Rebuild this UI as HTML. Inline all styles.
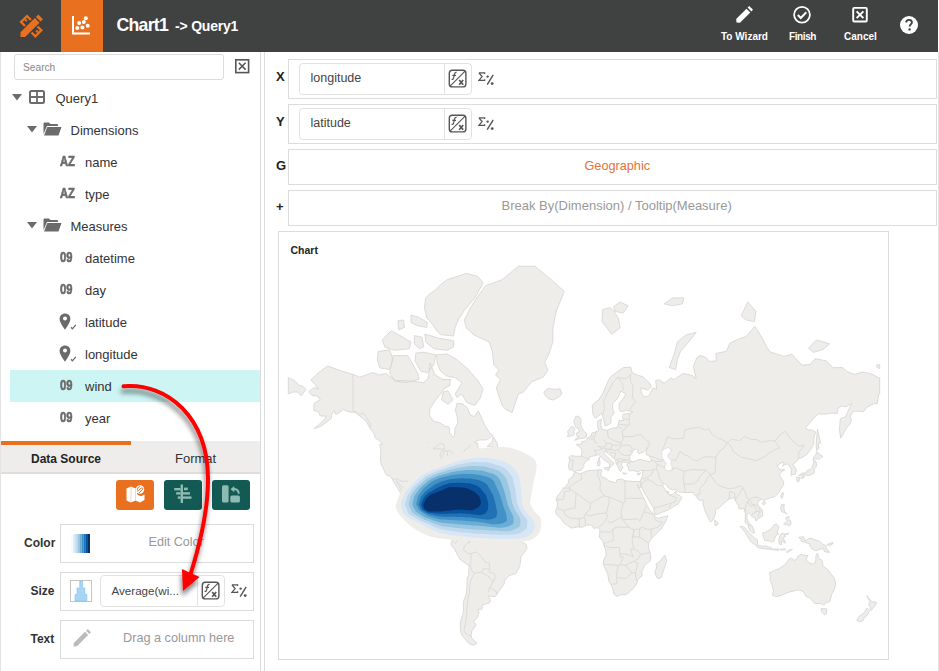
<!DOCTYPE html>
<html><head><meta charset="utf-8"><style>
html,body{margin:0;padding:0;}
body{width:939px;height:671px;overflow:hidden;position:relative;background:#fff;font-family:"Liberation Sans", sans-serif;}
.t{position:absolute;white-space:nowrap;}
svg{display:block}
*{box-sizing:border-box}
</style></head><body>
<div style="position:absolute;left:0px;top:0px;width:938px;height:52px;background:#404141"></div><div style="position:absolute;left:61px;top:0px;width:42px;height:52px;background:#e8701e"></div><svg style="position:absolute;left:0;top:0" width="60" height="52" viewBox="0 0 60 52">
<g fill="#e8701e" transform="translate(31.3,26.2) rotate(-45)">
<path d="M-12 -3.3 H8.3 V3.3 H-12 L-15.3 0 Z"/>
<rect x="9.8" y="-3.3" width="3.4" height="6.6"/>
<path d="M-5.4 -4.6 V-11.4 H5.3 V-4.6 H3 V-9.1 H-3.1 V-4.6 Z"/>
<rect x="-0.6" y="-9.1" width="2" height="2.4"/>
<path d="M-5.4 4.6 V11.2 H5.3 V4.6 H3 V8.9 H-3.1 V4.6 Z"/>
<rect x="-0.6" y="6.5" width="2" height="2.4"/>
</g></svg><svg style="position:absolute;left:70px;top:14px" width="22" height="22" viewBox="0 0 22 22">
<path d="M3 2 V19.5 H20" stroke="#fff" stroke-width="2" fill="none"/>
<g fill="#fff"><circle cx="9.2" cy="9.1" r="2"/><circle cx="15.8" cy="4.3" r="2"/><circle cx="13.8" cy="8" r="2"/><circle cx="17.7" cy="11.8" r="2"/><circle cx="7.3" cy="13.9" r="2"/><circle cx="12.4" cy="13.4" r="2"/></g></svg><div class="t" style="left:116.5px;top:17.42px;font-size:17.7px;line-height:17.7px;font-weight:700;color:#fff;letter-spacing:-0.75px">Chart1</div><div class="t" style="left:175px;top:19.15px;font-size:14px;line-height:14px;font-weight:700;color:#fff;letter-spacing:-0.2px">-&gt; Query1</div><svg style="position:absolute;left:734px;top:5px" width="20" height="20" viewBox="0 0 20 20">
<path d="M2.5 17.5 L2.2 14 L12.5 3.7 L16.3 7.5 L6 17.8 Z" fill="#fff"/><path d="M13.6 2.6 L15.2 1 L19 4.8 L17.4 6.4 Z" fill="#fff"/></svg><div class="t" style="left:721px;top:31.54px;font-size:10px;line-height:10px;font-weight:700;color:#fff;">To Wizard</div><svg style="position:absolute;left:792px;top:5px" width="20" height="20" viewBox="0 0 20 20">
<circle cx="10" cy="9.8" r="7.9" stroke="#fff" stroke-width="1.8" fill="none"/><path d="M5.8 10 L8.8 13 L14.3 7.3" stroke="#fff" stroke-width="2" fill="none"/></svg><div class="t" style="left:789px;top:31.54px;font-size:10px;line-height:10px;font-weight:700;color:#fff;letter-spacing:-0.4px">Finish</div><svg style="position:absolute;left:851px;top:6px" width="18" height="18" viewBox="0 0 18 18">
<rect x="2.2" y="1.9" width="13.6" height="13.6" rx="1" stroke="#fff" stroke-width="1.9" fill="none"/><path d="M5.6 5.3 L12.4 12.1 M12.4 5.3 L5.6 12.1" stroke="#fff" stroke-width="1.9"/></svg><div class="t" style="left:844px;top:31.54px;font-size:10px;line-height:10px;font-weight:700;color:#fff;">Cancel</div><svg style="position:absolute;left:899px;top:15px" width="20" height="20" viewBox="0 0 20 20">
<circle cx="10" cy="10" r="9" fill="#fff"/><path d="M7.2 7.6 C7.2 5.8 8.4 4.9 10 4.9 C11.7 4.9 12.9 5.9 12.9 7.4 C12.9 9.2 10.6 9.6 10.6 11.6" stroke="#404141" stroke-width="1.9" fill="none"/><circle cx="10.6" cy="14.4" r="1.2" fill="#404141"/></svg><div style="position:absolute;left:0px;top:52px;width:1px;height:619px;background:#e3e3e3"></div><div style="position:absolute;left:938px;top:52px;width:1px;height:619px;background:#e3e3e3"></div><div style="position:absolute;left:260px;top:52px;width:1px;height:619px;background:#dcdcdc"></div><div style="position:absolute;left:264px;top:52px;width:1px;height:619px;background:#dcdcdc"></div><div style="position:absolute;left:14px;top:54px;width:210px;height:26px;border:1px solid #dcdcdc;border-radius:3px"></div><div class="t" style="left:23px;top:62.57px;font-size:10.2px;line-height:10.2px;font-weight:400;color:#888;">Search</div><svg style="position:absolute;left:235px;top:59px" width="15" height="15" viewBox="0 0 15 15">
<rect x="0.8" y="0.8" width="12.8" height="12.8" stroke="#555" stroke-width="1.6" fill="none"/><path d="M3.8 3.8 L10.6 10.6 M10.6 3.8 L3.8 10.6" stroke="#555" stroke-width="1.5"/></svg><svg style="position:absolute;left:12px;top:94px" width="10" height="7" viewBox="0 0 10 7"><path d="M0 0 H10 L5 6.5 Z" fill="#6b6b6b"/></svg><svg style="position:absolute;left:29px;top:90px" width="16" height="14" viewBox="0 0 16 14">
<rect x="1" y="1" width="14" height="12" rx="1.5" stroke="#6b6b6b" stroke-width="2" fill="none"/><path d="M1 7 H15 M8 1 V13" stroke="#6b6b6b" stroke-width="1.8"/></svg><div class="t" style="left:55.5px;top:92.00px;font-size:13px;line-height:13px;font-weight:400;color:#333;">Query1</div><svg style="position:absolute;left:27px;top:126px" width="10" height="7" viewBox="0 0 10 7"><path d="M0 0 H10 L5 6.5 Z" fill="#6b6b6b"/></svg><svg style="position:absolute;left:43px;top:122px" width="19" height="14" viewBox="0 0 19 14">
<path d="M0.5 1.5 Q0.5 0.5 1.5 0.5 H6 L7.5 2 H14 Q15 2 15 3 V4 H4 L0.5 12 Z" fill="#6b6b6b"/><path d="M4.3 5 H18.5 L15.5 13.5 H1 Z" fill="#6b6b6b"/></svg><div class="t" style="left:70.5px;top:124.00px;font-size:13px;line-height:13px;font-weight:400;color:#333;">Dimensions</div><div class="t" style="left:60px;top:153.75px;font-size:14px;line-height:14px;font-weight:700;color:#6b6b6b;transform:scaleX(0.8);transform-origin:0 0;-webkit-text-stroke:0.6px #6b6b6b">AZ</div><div class="t" style="left:85px;top:155.50px;font-size:13px;line-height:13px;font-weight:400;color:#333;">name</div><div class="t" style="left:60px;top:185.75px;font-size:14px;line-height:14px;font-weight:700;color:#6b6b6b;transform:scaleX(0.8);transform-origin:0 0;-webkit-text-stroke:0.6px #6b6b6b">AZ</div><div class="t" style="left:85px;top:187.50px;font-size:13px;line-height:13px;font-weight:400;color:#333;">type</div><svg style="position:absolute;left:27px;top:222px" width="10" height="7" viewBox="0 0 10 7"><path d="M0 0 H10 L5 6.5 Z" fill="#6b6b6b"/></svg><svg style="position:absolute;left:43px;top:218px" width="19" height="14" viewBox="0 0 19 14">
<path d="M0.5 1.5 Q0.5 0.5 1.5 0.5 H6 L7.5 2 H14 Q15 2 15 3 V4 H4 L0.5 12 Z" fill="#6b6b6b"/><path d="M4.3 5 H18.5 L15.5 13.5 H1 Z" fill="#6b6b6b"/></svg><div class="t" style="left:70.5px;top:220.00px;font-size:13px;line-height:13px;font-weight:400;color:#333;">Measures</div><div style="position:absolute;left:10px;top:370px;width:250px;height:32px;background:#ccf5f4"></div><div class="t" style="left:60px;top:249.75px;font-size:14px;line-height:14px;font-weight:700;color:#6b6b6b;transform:scaleX(0.8);transform-origin:0 0;-webkit-text-stroke:0.6px #6b6b6b">09</div><div class="t" style="left:85px;top:251.50px;font-size:13px;line-height:13px;font-weight:400;color:#333;">datetime</div><div class="t" style="left:60px;top:281.75px;font-size:14px;line-height:14px;font-weight:700;color:#6b6b6b;transform:scaleX(0.8);transform-origin:0 0;-webkit-text-stroke:0.6px #6b6b6b">09</div><div class="t" style="left:85px;top:283.50px;font-size:13px;line-height:13px;font-weight:400;color:#333;">day</div><svg style="position:absolute;left:58.5px;top:312.5px" width="18" height="18" viewBox="0 0 18 18">
<path d="M6 0.5 C2.9 0.5 0.6 2.8 0.6 5.9 C0.6 9.6 6 16.6 6 16.6 C6 16.6 11.4 9.6 11.4 5.9 C11.4 2.8 9.1 0.5 6 0.5 Z M6 3.6 A2 2 0 1 1 6 7.6 A2 2 0 1 1 6 3.6 Z" fill="#6b6b6b" fill-rule="evenodd"/>
<path d="M12 14.2 L13.4 15.8 L16.8 11.8" stroke="#6b6b6b" stroke-width="1.3" fill="none"/></svg><div class="t" style="left:85px;top:315.50px;font-size:13px;line-height:13px;font-weight:400;color:#333;">latitude</div><svg style="position:absolute;left:58.5px;top:344.5px" width="18" height="18" viewBox="0 0 18 18">
<path d="M6 0.5 C2.9 0.5 0.6 2.8 0.6 5.9 C0.6 9.6 6 16.6 6 16.6 C6 16.6 11.4 9.6 11.4 5.9 C11.4 2.8 9.1 0.5 6 0.5 Z M6 3.6 A2 2 0 1 1 6 7.6 A2 2 0 1 1 6 3.6 Z" fill="#6b6b6b" fill-rule="evenodd"/>
<path d="M12 14.2 L13.4 15.8 L16.8 11.8" stroke="#6b6b6b" stroke-width="1.3" fill="none"/></svg><div class="t" style="left:85px;top:347.50px;font-size:13px;line-height:13px;font-weight:400;color:#333;">longitude</div><div class="t" style="left:60px;top:377.75px;font-size:14px;line-height:14px;font-weight:700;color:#6b6b6b;transform:scaleX(0.8);transform-origin:0 0;-webkit-text-stroke:0.6px #6b6b6b">09</div><div class="t" style="left:85px;top:379.50px;font-size:13px;line-height:13px;font-weight:400;color:#333;">wind</div><div class="t" style="left:60px;top:409.75px;font-size:14px;line-height:14px;font-weight:700;color:#6b6b6b;transform:scaleX(0.8);transform-origin:0 0;-webkit-text-stroke:0.6px #6b6b6b">09</div><div class="t" style="left:85px;top:411.50px;font-size:13px;line-height:13px;font-weight:400;color:#333;">year</div><div style="position:absolute;left:1px;top:441px;width:259px;height:31px;background:#eeedeb"></div><div style="position:absolute;left:1px;top:472px;width:259px;height:2px;background:#dedede"></div><div style="position:absolute;left:1px;top:441px;width:130px;height:4px;background:#e8701e"></div><div class="t" style="left:31px;top:452.84px;font-size:12px;line-height:12px;font-weight:700;color:#222;">Data Source</div><div class="t" style="left:175px;top:452.00px;font-size:13px;line-height:13px;font-weight:400;color:#333;">Format</div><div style="position:absolute;left:116px;top:480px;width:38px;height:30px;background:#e8701e;border-radius:3px"></div><div style="position:absolute;left:164px;top:480px;width:38px;height:30px;background:#125a53;border-radius:3px"></div><div style="position:absolute;left:212px;top:480px;width:38px;height:30px;background:#125a53;border-radius:3px"></div><svg style="position:absolute;left:112px;top:476px" width="142" height="38" viewBox="112 476 142 38">
<path d="M126.5 488.5 L131 486.5 L135.5 488.5 L137 487.8 V494 Q139 496.5 141.5 496 L144.5 494.5 V500 L140 502.5 L135.5 500.5 L131 502.5 L126.5 500.5 Z" fill="#fff"/>
<path d="M131 487 V502 M135.5 489 V500.5" stroke="#f5c9a8" stroke-width="0.8"/>
<circle cx="140" cy="489.5" r="4.2" fill="#fff"/>
<path d="M137.6 491.6 L141.2 488 A1 1 0 0 1 142.6 489.4 L139 493" stroke="#e8701e" stroke-width="1" fill="none"/><path d="M137.5 490.5 Q137 487 140 486.3" stroke="#e8701e" stroke-width="0.9" fill="none"/>
<g fill="#8dbab3">
<rect x="180.6" y="484.5" width="2.4" height="18.5"/>
<rect x="174.2" y="488" width="6.4" height="2.4"/><rect x="184" y="487.6" width="3.8" height="2.6"/>
<rect x="176.2" y="492.2" width="4.4" height="2.4"/><rect x="183" y="492.2" width="7" height="2.4"/>
<rect x="177.8" y="496.4" width="2.8" height="2.4"/><rect x="183" y="496.4" width="8.5" height="2.4"/>
<rect x="222" y="485.3" width="6.6" height="17.3" rx="1.5"/><rect x="230.3" y="495.6" width="9.6" height="7" rx="1.5"/>
</g>
<path d="M233 489 Q238.5 488.6 238.8 493.8" stroke="#8dbab3" stroke-width="2" fill="none"/><path d="M230.5 489.2 L234.3 486 L234.3 492.2 Z" fill="#8dbab3"/>
</svg><div class="t" style="left:24px;top:536.84px;font-size:12px;line-height:12px;font-weight:700;color:#333;">Color</div><div style="position:absolute;left:60px;top:524px;width:194px;height:39px;border:1px solid #dcdcdc"></div><svg style="position:absolute;left:71px;top:534px" width="19" height="19"><rect x="0.00" y="0" width="2.16" height="19" fill="#f7fbff"/><rect x="2.11" y="0" width="2.16" height="19" fill="#deebf7"/><rect x="4.22" y="0" width="2.16" height="19" fill="#c6dbef"/><rect x="6.33" y="0" width="2.16" height="19" fill="#9ecae1"/><rect x="8.44" y="0" width="2.16" height="19" fill="#6baed6"/><rect x="10.56" y="0" width="2.16" height="19" fill="#4292c6"/><rect x="12.67" y="0" width="2.16" height="19" fill="#2171b5"/><rect x="14.78" y="0" width="2.16" height="19" fill="#08519c"/><rect x="16.89" y="0" width="2.16" height="19" fill="#08306b"/></svg><div class="t" style="left:148.5px;top:536.33px;font-size:12.6px;line-height:12.6px;font-weight:400;color:#999;">Edit Color</div><div class="t" style="left:30.5px;top:584.84px;font-size:12px;line-height:12px;font-weight:700;color:#333;">Size</div><div style="position:absolute;left:60px;top:572px;width:194px;height:39px;border:1px solid #dcdcdc"></div><svg style="position:absolute;left:70px;top:580px" width="22" height="22" viewBox="0 0 22 22">
<rect x="0.5" y="0.5" width="21" height="21" fill="#fff" stroke="#c4c4c4"/>
<path d="M9.7 1 H12.6 V8 H14.9 V14.3 H16.9 V21 H5 V14.3 H7 V8 H9.7 Z" fill="#a6d6f4" stroke="#86c3ea" stroke-width="0.6"/></svg><div style="position:absolute;left:100px;top:575px;width:125px;height:32px;border:1px solid #e2e2e2;border-radius:4px"></div><div style="position:absolute;left:197px;top:576px;width:1px;height:30px;background:#e2e2e2"></div><div class="t" style="left:111.5px;top:585.18px;font-size:11.6px;line-height:11.6px;font-weight:400;color:#444;">Average(wi...</div><svg style="position:absolute;left:201px;top:581px" width="19" height="19" viewBox="0 0 19 19">
<rect x="1.3" y="1.3" width="16.6" height="16.6" rx="3" stroke="#555" stroke-width="1.4" fill="none"/>
<path d="M1.8 17.4 L17.4 1.8" stroke="#555" stroke-width="1.1"/>
<path d="M8.6 3.4 Q7 3 6.5 4.8 L5.6 9.2 Q5.2 10.8 3.6 10.4 M4.3 6.3 H8" stroke="#555" stroke-width="1.2" fill="none"/>
<path d="M11.2 11 L15.2 15.8 M15.2 11 L11.2 15.8" stroke="#555" stroke-width="1.7"/></svg><svg style="position:absolute;left:231px;top:583.5px" width="17" height="14" viewBox="0 0 17 14">
<path d="M0.9 0.9 H6.6 V2 M0.9 0.9 L4.1 4.6 L0.9 8.4 H6.6 V7.3" stroke="#555" stroke-width="1.3" fill="none"/>
<circle cx="9.6" cy="4.6" r="1.2" fill="#555"/><circle cx="14.2" cy="11.6" r="1.4" fill="#555"/><path d="M15.2 2.8 L9.2 12.6" stroke="#555" stroke-width="1.4"/></svg><div class="t" style="left:30.5px;top:632.84px;font-size:12px;line-height:12px;font-weight:700;color:#333;">Text</div><div style="position:absolute;left:60px;top:620px;width:194px;height:39px;border:1px solid #dcdcdc"></div><svg style="position:absolute;left:72px;top:628px" width="20" height="20" viewBox="0 0 20 20">
<path d="M1.5 18.5 L1.8 15 L13 3.8 L16.2 7 L5 18.2 Z" fill="#bbb"/><path d="M14.1 2.7 L15.8 1 L19 4.2 L17.3 5.9 Z" fill="#bbb"/></svg><div class="t" style="left:123px;top:632.25px;font-size:12.7px;line-height:12.7px;font-weight:400;color:#999;">Drag a column here</div><div style="position:absolute;left:288px;top:59px;width:649px;height:40px;border:1px solid #dcdcdc"></div><div class="t" style="left:276px;top:70.00px;font-size:13px;line-height:13px;font-weight:700;color:#222;">X</div><div style="position:absolute;left:299px;top:63px;width:173px;height:32px;border:1px solid #e2e2e2;border-radius:4px"></div><div style="position:absolute;left:444px;top:64px;width:1px;height:30px;background:#e2e2e2"></div><div class="t" style="left:310.5px;top:72.42px;font-size:12.5px;line-height:12.5px;font-weight:400;color:#444;">longitude</div><svg style="position:absolute;left:447.5px;top:69.2px" width="19" height="19" viewBox="0 0 19 19">
<rect x="1.3" y="1.3" width="16.6" height="16.6" rx="3" stroke="#555" stroke-width="1.4" fill="none"/>
<path d="M1.8 17.4 L17.4 1.8" stroke="#555" stroke-width="1.1"/>
<path d="M8.6 3.4 Q7 3 6.5 4.8 L5.6 9.2 Q5.2 10.8 3.6 10.4 M4.3 6.3 H8" stroke="#555" stroke-width="1.2" fill="none"/>
<path d="M11.2 11 L15.2 15.8 M15.2 11 L11.2 15.8" stroke="#555" stroke-width="1.7"/></svg><svg style="position:absolute;left:477.8px;top:71.8px" width="17" height="14" viewBox="0 0 17 14">
<path d="M0.9 0.9 H6.6 V2 M0.9 0.9 L4.1 4.6 L0.9 8.4 H6.6 V7.3" stroke="#555" stroke-width="1.3" fill="none"/>
<circle cx="9.6" cy="4.6" r="1.2" fill="#555"/><circle cx="14.2" cy="11.6" r="1.4" fill="#555"/><path d="M15.2 2.8 L9.2 12.6" stroke="#555" stroke-width="1.4"/></svg><div style="position:absolute;left:288px;top:104px;width:649px;height:40px;border:1px solid #dcdcdc"></div><div class="t" style="left:276px;top:115.00px;font-size:13px;line-height:13px;font-weight:700;color:#222;">Y</div><div style="position:absolute;left:299px;top:108px;width:173px;height:32px;border:1px solid #e2e2e2;border-radius:4px"></div><div style="position:absolute;left:444px;top:109px;width:1px;height:30px;background:#e2e2e2"></div><div class="t" style="left:310.5px;top:117.42px;font-size:12.5px;line-height:12.5px;font-weight:400;color:#444;">latitude</div><svg style="position:absolute;left:447.5px;top:114.2px" width="19" height="19" viewBox="0 0 19 19">
<rect x="1.3" y="1.3" width="16.6" height="16.6" rx="3" stroke="#555" stroke-width="1.4" fill="none"/>
<path d="M1.8 17.4 L17.4 1.8" stroke="#555" stroke-width="1.1"/>
<path d="M8.6 3.4 Q7 3 6.5 4.8 L5.6 9.2 Q5.2 10.8 3.6 10.4 M4.3 6.3 H8" stroke="#555" stroke-width="1.2" fill="none"/>
<path d="M11.2 11 L15.2 15.8 M15.2 11 L11.2 15.8" stroke="#555" stroke-width="1.7"/></svg><svg style="position:absolute;left:477.8px;top:116.8px" width="17" height="14" viewBox="0 0 17 14">
<path d="M0.9 0.9 H6.6 V2 M0.9 0.9 L4.1 4.6 L0.9 8.4 H6.6 V7.3" stroke="#555" stroke-width="1.3" fill="none"/>
<circle cx="9.6" cy="4.6" r="1.2" fill="#555"/><circle cx="14.2" cy="11.6" r="1.4" fill="#555"/><path d="M15.2 2.8 L9.2 12.6" stroke="#555" stroke-width="1.4"/></svg><div style="position:absolute;left:288px;top:149px;width:649px;height:36px;border:1px solid #dcdcdc"></div><div class="t" style="left:276px;top:159.00px;font-size:13px;line-height:13px;font-weight:700;color:#222;">G</div><div class="t" style="left:584.5px;top:160.25px;font-size:12.7px;line-height:12.7px;font-weight:400;color:#e8703a;">Geographic</div><div style="position:absolute;left:288px;top:190px;width:649px;height:36px;border:1px solid #dcdcdc"></div><div class="t" style="left:276px;top:200.00px;font-size:13px;line-height:13px;font-weight:700;color:#222;">+</div><div class="t" style="left:501.5px;top:199.20px;font-size:13px;line-height:13px;font-weight:400;color:#999;">Break By(Dimension) / Tooltip(Measure)</div><div style="position:absolute;left:278px;top:231px;width:611px;height:429px;border:1px solid #dcdcdc"></div><div class="t" style="left:290.5px;top:245.11px;font-size:10.5px;line-height:10.5px;font-weight:700;color:#222;">Chart</div><svg style="position:absolute;left:0;top:0" width="939" height="671" viewBox="0 0 939 671">
<defs><clipPath id="mapclip"><rect x="279" y="232" width="609" height="427"/></clipPath></defs>
<g clip-path="url(#mapclip)">
<path d="M308.7,391.7L312.1,388.9L315.4,387.6L318.6,389.7L315.9,385.5L310.8,380.1L317.0,374.0L321.9,370.1L327.7,366.1L335.0,368.6L341.6,371.1L353.0,374.4L359.6,377.2L366.1,374.9L372.7,372.5L379.2,374.9L385.8,373.5L395.6,380.4L407.1,380.8L423.5,382.6L428.4,378.1L430.0,363.0L434.9,374.9L443.1,379.5L450.5,379.5L449.7,386.0L444.8,388.0L441.5,392.8L436.6,398.6L430.0,408.5L429.2,415.0L433.3,421.2L439.9,422.7L444.8,426.2L449.2,427.1L449.7,432.6L453.0,437.2L454.6,435.3L454.9,428.5L457.9,422.7L457.1,416.6L455.4,410.2L457.1,403.3L462.8,404.0L467.7,408.1L470.2,415.0L474.3,416.6L478.3,410.8L482.4,419.7L484.9,425.6L490.6,434.0L492.8,435.3L487.4,439.8L479.2,440.0L474.3,442.3L477.5,443.3L478.3,449.2L484.1,450.8L485.7,449.9L479.2,455.0L475.9,456.1L475.1,453.4L472.6,454.1L469.3,455.9L468.5,460.1L466.1,461.2L462.8,462.7L462.8,465.5L460.3,468.2L459.5,470.1L460.3,473.5L457.9,475.1L454.6,477.7L451.3,480.6L450.8,483.8L452.8,489.4L452.3,492.7L450.0,491.3L448.5,487.6L447.6,484.8L445.6,483.8L442.3,483.1L438.2,483.3L437.4,485.5L434.9,485.4L430.0,484.6L425.1,488.0L424.6,491.5L424.0,498.4L427.6,504.0L429.2,505.1L434.1,504.6L436.1,500.2L441.0,499.3L440.7,502.8L439.4,506.3L439.0,508.8L443.1,509.2L447.6,510.5L447.2,514.8L446.9,517.6L450.5,520.6L453.8,519.8L457.1,521.3L457.2,522.4L455.7,523.6L452.5,523.2L450.2,521.9L447.1,521.6L443.6,519.1L440.7,514.1L434.1,512.4L430.0,508.8L425.9,509.4L421.0,507.5L416.1,505.4L411.2,501.4L411.2,497.6L404.6,496.7L403.0,495.8L400.5,493.1L397.3,487.6L395.6,484.8L392.8,480.6L392.0,478.7L389.9,476.1L386.5,475.1L384.3,471.1L383.3,468.4L381.2,464.2L380.4,459.5L380.9,449.9L379.7,444.6L382.5,444.3L379.2,440.5L375.2,438.0L374.3,434.0L370.2,428.5L366.1,421.2L361.2,417.2L355.5,412.5L348.1,411.8L343.2,409.2L338.3,413.4L335.5,414.4L334.2,410.8L331.7,414.4L331.4,418.2L326.8,421.8L321.9,425.6L317.0,427.9L314.1,428.5L318.6,424.8L324.4,419.7L326.0,416.0L320.3,416.0L318.6,412.1L313.7,410.2L314.2,403.3L320.3,399.7L317.0,395.9L312.1,395.6ZM453.0,399.7L448.0,404.3L441.5,399.7L443.1,392.1L448.0,390.9ZM486.9,446.5L492.3,441.8L493.1,436.4L497.2,443.1L497.8,446.8L496.0,448.7L492.3,446.8ZM512.1,412.5L515.2,403.3L518.5,394.0L523.4,392.1L531.6,381.7L543.0,377.2L548.0,370.1L544.7,362.5L548.8,354.2L552.9,341.9L552.9,327.8L556.2,311.4L564.3,291.4L551.2,279.7L534.9,266.2L518.5,266.2L502.1,279.7L485.7,285.7L477.5,296.8L471.0,306.8L464.4,320.0L466.1,327.8L474.3,335.1L489.0,341.9L492.3,351.2L493.9,365.1L498.8,370.1L495.5,374.9L500.5,379.5L496.4,388.0L498.8,395.9L502.1,405.0L505.4,409.2ZM543.9,392.1L548.0,388.4L554.5,389.3L560.2,388.9L561.9,394.0L559.4,396.7L553.4,400.0L548.0,398.6L544.7,394.8ZM592.2,405.0L593.0,415.0L595.5,418.2L598.7,416.0L601.2,413.4L602.3,415.0L603.7,419.7L605.0,425.6L607.4,425.3L611.0,422.7L611.0,416.6L614.3,413.4L612.7,408.5L612.7,403.3L617.6,398.6L620.9,390.9L625.8,394.0L624.1,397.8L619.2,403.3L619.2,409.2L620.9,411.8L626.6,410.5L633.1,411.8L629.9,413.4L623.3,414.1L622.5,416.6L623.6,420.6L619.2,420.3L618.4,424.2L616.3,428.8L614.3,427.6L607.3,430.2L602.0,429.6L600.7,425.3L601.4,419.1L597.9,420.9L597.3,425.6L598.6,429.9L597.4,431.3L595.5,431.8L591.9,433.2L590.6,436.7L588.1,437.7L586.6,440.0L584.0,441.8L581.9,441.3L581.5,444.1L576.3,444.6L579.9,447.2L582.0,450.3L581.5,456.1L577.8,456.3L570.9,455.7L568.8,457.2L569.6,459.9L568.4,466.6L569.4,470.1L571.7,469.7L574.2,471.7L575.3,471.9L576.6,470.7L580.7,470.5L583.2,467.4L584.3,466.3L583.5,464.9L585.5,461.6L589.2,459.5L589.1,457.0L591.9,456.3L596.3,455.4L598.4,454.1L601.2,457.2L604.1,460.1L607.3,462.1L609.7,463.8L609.6,468.0L611.2,466.1L612.2,464.9L614.3,463.6L611.8,461.6L610.2,459.7L606.3,455.9L604.1,453.6L604.3,451.5L606.4,451.1L606.3,452.5L608.6,453.8L611.8,456.6L615.6,459.7L615.9,462.7L617.1,464.9L618.4,467.4L619.4,470.5L620.9,471.3L622.0,468.0L623.3,467.6L621.2,465.3L621.3,462.7L623.3,462.3L626.6,462.1L627.4,463.2L631.5,461.2L629.9,459.5L629.7,456.8L631.2,453.8L632.6,452.2L634.0,449.2L636.4,449.2L638.9,450.3L637.2,451.8L638.9,453.8L642.1,452.5L643.8,452.0L647.9,447.5L646.2,450.8L646.2,454.3L649.2,456.1L652.1,460.3L649.5,461.6L643.0,460.3L641.3,459.5L638.1,459.7L634.8,461.4L631.7,461.4L627.4,463.8L626.8,464.9L628.2,467.0L628.7,470.1L630.7,470.7L634.1,470.5L637.2,471.9L640.5,470.5L643.0,470.5L642.6,473.1L642.8,475.1L641.3,478.1L640.5,481.0L640.0,481.4L641.2,484.8L642.1,488.5L644.6,493.1L647.9,498.4L650.3,502.8L653.6,508.0L654.9,514.4L657.7,514.3L662.6,512.2L669.2,509.4L674.1,506.3L678.2,503.9L682.0,497.6L679.8,495.4L677.4,495.1L676.2,493.3L676.2,490.7L674.9,492.2L672.5,494.5L669.2,494.9L668.4,491.5L667.9,491.1L667.2,493.4L665.9,490.4L663.4,487.2L662.6,483.8L664.3,483.5L666.7,484.8L668.4,487.8L672.5,490.0L676.2,489.3L678.2,491.6L684.9,492.7L692.9,492.4L694.6,494.9L696.7,497.0L697.0,497.9L699.5,500.6L702.8,499.7L703.2,503.7L704.4,508.8L706.0,513.1L708.2,517.3L709.3,520.6L710.9,522.1L712.3,520.6L713.9,518.4L715.4,513.9L715.4,509.7L718.8,508.0L722.4,504.6L726.2,501.1L729.0,499.0L732.2,498.1L734.4,497.7L735.4,500.7L738.5,505.4L738.8,508.8L740.4,509.2L743.9,508.0L745.3,513.1L745.3,518.1L745.0,522.3L748.1,524.7L748.6,527.2L749.9,530.8L753.5,533.3L754.7,532.8L753.4,528.8L751.9,525.6L749.4,524.1L748.1,521.4L746.7,518.1L747.0,513.9L748.6,513.1L750.3,514.4L752.7,517.3L755.2,518.1L756.0,521.1L758.9,518.3L762.9,515.9L762.2,509.7L758.4,505.9L757.3,503.7L758.9,500.7L761.7,499.2L764.5,501.4L765.8,499.3L769.9,498.1L774.8,496.7L778.9,492.5L780.6,489.4L783.7,484.2L783.7,481.9L781.9,479.1L779.4,475.3L781.1,472.1L784.8,469.5L779.7,469.9L778.1,467.0L776.8,465.9L779.7,464.0L783.0,461.9L783.8,463.8L782.5,466.3L784.7,464.7L787.8,463.8L791.4,469.1L791.2,474.1L790.9,475.3L795.3,473.9L796.1,472.1L796.1,469.1L794.5,467.0L792.8,464.2L796.6,461.6L798.1,458.8L801.9,457.7L805.9,455.2L810.9,449.2L813.6,444.3L814.1,436.7L815.8,432.1L811.7,429.9L808.4,429.9L805.5,427.9L809.2,423.6L815.0,416.6L818.2,414.1L826.4,414.1L831.0,413.1L837.1,413.4L837.9,408.5L841.2,406.1L846.1,406.8L851.8,403.3L847.7,411.8L845.8,416.6L840.3,418.8L839.5,429.9L840.7,438.2L844.0,432.6L846.1,428.5L850.2,423.6L851.5,418.8L849.8,417.2L852.6,412.1L855.9,410.8L863.3,411.8L867.4,406.8L874.7,403.3L877.2,404.0L878.8,394.0L879.7,394.0L879.7,377.7L878.8,377.7L870.6,373.5L862.5,372.1L854.3,374.4L846.9,371.6L842.8,367.6L833.0,367.6L826.4,360.9L815.0,358.7L810.0,364.6L801.9,365.1L795.3,358.1L792.0,354.2L783.8,356.4L777.3,354.2L769.9,351.8L767.5,348.2L760.9,335.8L754.8,326.3L746.2,336.5L739.6,338.6L729.8,343.2L726.5,351.2L715.9,353.6L716.4,360.9L709.3,361.4L706.0,357.6L700.3,355.3L696.7,358.1L693.4,366.1L696.2,379.0L692.1,375.4L683.1,373.5L674.1,379.5L670.8,378.1L664.3,383.0L659.3,379.9L655.7,380.4L656.6,389.3L652.8,388.0L649.2,395.6L644.3,397.1L641.3,392.8L640.8,387.6L647.4,390.1L651.3,386.8L649.5,383.0L643.0,376.8L638.1,375.4L632.3,373.0L630.7,367.1L623.3,367.6L616.8,372.1L610.2,377.2L607.8,381.7L605.3,388.0L602.0,394.8L598.7,399.7ZM574.3,472.5L572.9,476.1L568.9,479.4L568.3,483.1L565.2,487.2L562.4,489.4L559.4,494.0L557.3,496.1L556.2,500.2L557.5,502.8L557.0,508.2L555.3,511.1L556.6,514.8L559.4,517.3L561.9,519.8L564.0,523.1L567.6,525.6L571.7,528.2L577.4,526.9L582.4,527.2L586.5,525.2L589.6,524.9L591.4,525.1L593.8,528.4L597.9,527.7L599.9,529.5L599.6,533.8L599.1,537.0L602.8,541.1L604.0,545.2L605.6,549.9L606.1,555.2L603.7,560.3L603.3,564.5L607.8,574.0L608.9,581.4L611.8,586.0L614.1,594.5L616.8,596.3L620.9,594.7L625.9,594.7L629.9,591.7L634.8,586.6L637.4,582.3L637.7,579.5L642.1,575.9L641.8,571.5L644.6,565.4L650.7,560.3L650.3,553.5L648.7,548.5L648.4,546.1L649.0,542.0L652.1,538.0L658.2,532.1L661.8,528.0L665.4,521.8L668.0,515.9L663.4,516.8L657.7,518.3L654.9,516.4L652.8,513.1L649.5,509.7L647.1,505.4L644.9,500.2L643.8,498.1L642.1,494.9L640.2,490.4L638.1,486.7L637.2,484.0L639.0,488.0L640.2,488.0L641.2,484.8L640.0,481.4L636.9,481.4L633.0,481.6L628.2,481.0L625.0,480.8L621.7,478.9L616.9,479.8L615.9,482.9L609.4,481.0L605.6,478.3L602.0,477.1L600.7,474.1L602.0,470.1L600.1,469.5L596.3,470.1L588.9,470.5L583.0,472.7L579.9,473.9L575.3,472.3ZM664.8,555.2L666.7,561.1L665.6,564.5L662.6,573.2L661.1,577.7L657.7,578.6L655.6,575.0L654.9,571.5L656.6,568.0L656.1,563.7L660.2,561.1L662.6,557.7ZM457.2,521.3L459.5,519.8L460.3,518.1L462.8,516.8L466.1,514.9L466.9,517.6L469.3,515.3L472.6,518.1L477.5,518.6L481.6,517.8L484.1,520.6L488.2,523.9L493.9,525.7L498.8,527.5L500.5,529.7L502.1,532.5L502.9,535.4L505.4,537.0L511.1,539.5L516.8,540.2L520.9,541.5L526.2,544.4L527.0,548.5L523.4,553.5L520.9,556.9L520.1,564.5L518.2,569.4L515.5,573.8L513.2,574.1L508.7,575.9L504.6,580.4L504.1,584.1L501.3,587.9L498.0,592.7L495.5,596.3L491.9,596.5L488.2,595.7L490.3,599.3L489.8,602.8L482.4,604.9L482.0,609.2L477.5,609.4L479.2,612.0L477.2,618.1L473.4,621.6L476.2,624.8L471.8,631.0L471.0,635.5L471.8,638.2L477.0,643.2L473.4,645.2L469.3,643.7L464.4,638.2L462.0,635.5L460.3,630.3L460.3,622.8L462.8,614.7L463.6,610.2L463.3,601.7L466.1,594.7L466.9,587.0L467.2,577.7L468.7,575.2L469.0,566.2L466.9,564.2L459.5,558.9L457.7,555.2L454.6,549.4L451.3,545.2L450.8,542.8L453.0,539.5L451.5,537.9L453.0,534.6L454.9,532.5L457.4,528.8L457.4,524.7L456.4,523.1ZM769.4,572.4L771.6,572.0L775.3,569.9L778.9,568.8L784.2,565.4L786.3,562.8L788.8,559.4L791.7,558.2L794.0,560.3L796.1,559.9L798.3,555.9L801.0,554.4L805.1,555.5L808.1,555.5L806.8,557.7L805.9,560.3L809.2,562.5L813.3,564.5L815.8,561.1L815.9,556.0L817.4,553.0L819.1,558.6L822.0,560.3L823.1,566.2L827.7,569.4L830.5,573.2L834.6,578.6L835.6,584.1L834.6,588.9L831.7,594.5L829.7,601.7L826.3,602.6L823.6,605.1L820.7,603.4L815.0,603.6L812.8,601.3L810.0,597.9L808.1,597.3L806.1,596.5L803.5,591.7L798.6,589.8L792.0,591.4L787.1,592.7L783.5,594.5L777.3,596.7L772.5,595.5L773.5,590.6L772.4,586.0L769.9,579.5L770.4,575.9ZM821.0,608.5L826.9,608.9L826.4,614.0L824.5,614.9L822.0,612.4ZM866.9,595.5L869.8,599.7L872.3,601.7L876.4,602.2L875.4,605.5L873.6,607.4L871.1,610.5L870.0,609.6L870.5,606.6L868.7,605.3L870.0,601.7L867.7,597.7ZM867.0,608.1L869.5,610.7L868.2,613.6L867.2,615.4L864.4,617.0L863.4,620.2L860.8,621.9L856.7,620.5L859.7,615.8L863.3,613.6L865.7,610.2ZM574.7,440.3L579.1,438.8L586.1,437.7L586.8,433.5L584.3,431.6L581.5,427.1L580.7,424.2L581.1,419.7L578.6,416.3L575.8,416.3L573.8,421.2L574.7,424.8L576.1,427.6L578.8,428.8L579.1,431.8L576.3,433.2L577.0,436.1L579.1,436.7L577.1,437.5ZM574.2,434.8L573.8,431.3L575.0,428.5L572.0,426.2L570.1,428.5L567.6,431.3L568.4,434.8L567.0,436.4L570.4,436.1ZM798.4,476.1L801.9,475.1L805.5,474.9L808.1,475.5L811.2,474.7L813.3,473.7L814.6,472.7L814.1,469.1L815.8,467.4L816.6,464.9L815.8,460.8L813.6,461.2L813.2,463.8L812.5,467.0L809.2,470.1L807.9,469.7L805.9,472.9L801.9,473.1L799.4,475.1ZM796.4,477.3L800.1,477.7L799.1,481.2L797.3,481.8L796.6,478.5ZM801.0,477.5L804.6,475.7L804.0,477.5L801.9,478.5ZM813.3,460.6L815.3,458.4L818.7,459.5L822.8,456.6L820.7,455.0L816.6,451.5L815.9,455.0L813.8,456.8L813.2,459.0ZM816.6,450.3L819.1,448.4L818.2,443.1L820.7,443.1L818.2,432.6L817.6,429.1L816.9,435.3L816.1,445.5ZM780.7,496.7L782.2,492.5L783.8,493.1L781.9,498.6ZM761.9,503.3L765.0,501.8L765.8,502.7L763.7,505.1ZM781.4,504.6L784.3,504.6L783.8,508.0L784.7,512.2L787.1,513.9L785.5,513.1L783.5,512.4L781.5,511.7L780.6,508.8ZM783.8,523.9L786.3,521.3L789.6,519.4L791.2,523.1L789.6,526.0L787.1,524.7ZM785.5,518.1L787.9,516.4L789.6,517.3L786.3,519.8ZM714.7,519.8L718.2,523.1L717.0,525.2L715.0,525.6L714.7,522.3ZM740.1,526.2L743.7,526.9L748.6,532.1L753.5,537.0L757.6,540.3L757.3,544.9L755.2,545.1L751.1,542.0L747.8,537.0L745.3,532.5ZM756.3,546.6L758.4,545.2L761.7,546.2L765.8,545.9L768.6,546.9L771.6,548.1L771.6,549.5L765.8,548.9L760.9,548.2L757.6,547.6ZM772.4,548.9L778.9,549.0L778.9,550.2L773.2,550.0ZM780.2,549.2L785.5,548.9L785.5,549.9L780.6,550.0ZM786.3,552.2L788.8,550.2L792.4,549.2L787.9,552.2ZM762.5,532.9L763.5,537.0L764.5,540.3L769.1,540.6L771.6,542.0L774.0,541.1L774.8,537.9L776.8,534.6L778.8,533.8L777.0,532.3L779.2,526.7L776.5,524.1L774.0,524.7L772.4,527.2L769.9,529.7L765.8,532.1ZM779.7,544.4L781.4,544.6L781.4,540.3L782.2,540.0L783.8,542.8L785.8,542.8L783.0,537.9L785.5,536.7L784.7,534.6L788.8,532.9L787.4,534.6L782.2,533.3L780.6,534.3L779.7,537.0L778.6,540.3ZM798.6,537.5L803.5,536.7L805.1,540.8L810.0,538.0L815.0,539.7L820.7,542.0L823.1,544.4L826.1,545.7L826.4,548.5L829.7,552.4L824.8,551.9L823.1,548.5L819.1,549.4L817.4,550.5L815.0,550.4L811.7,548.7L810.0,546.1L809.6,543.9L804.3,542.0L801.0,541.1L801.4,539.5L799.1,537.9ZM827.2,544.4L833.0,542.3L832.2,544.4L828.1,545.6ZM444.8,498.6L449.7,496.3L453.0,496.7L457.9,498.8L462.5,501.6L456.7,502.1L456.2,500.2L451.3,498.4L446.4,498.8ZM462.0,504.7L464.8,502.1L469.3,502.5L472.0,504.4L469.3,505.1L466.9,506.1L464.4,505.2ZM455.7,504.9L459.2,505.4L457.9,505.9ZM473.9,504.7L476.5,504.9L475.9,505.6L473.9,505.4ZM602.0,321.6L602.8,309.5L610.2,307.7L613.5,310.5L618.4,318.3L620.0,327.8L611.8,334.4L606.9,327.8ZM613.5,306.8L620.0,301.9L628.2,305.8L623.3,313.1L615.1,311.4ZM664.3,303.9L672.5,297.9L683.9,297.9L682.3,303.9L672.5,305.8ZM669.2,367.6L674.1,354.2L677.4,341.9L685.6,335.1L696.2,332.3L688.8,341.9L680.6,351.2L677.4,359.8L675.7,369.6ZM741.2,315.8L747.8,301.9L756.0,311.4L754.4,321.6L746.2,320.0ZM808.4,348.2L816.6,339.9L829.7,343.8L823.1,349.4L813.3,352.4ZM876.4,365.1L879.7,364.6L879.7,368.6L877.2,367.6ZM288.3,377.7L294.1,380.4L299.0,385.1L303.1,386.4L306.0,389.7L303.9,392.1L301.4,395.9L297.4,392.1L292.4,392.1L288.3,394.0ZM604.5,467.8L609.6,467.4L608.7,470.7L604.5,468.8ZM597.4,461.6L600.1,461.2L599.7,465.7L597.8,465.9ZM599.6,457.2L599.6,460.6L598.1,460.1ZM622.5,472.9L627.1,473.5L624.1,474.3ZM636.9,474.1L640.7,472.7L639.5,474.7L637.2,474.7ZM447.0,279.8L466.7,273.3L478.2,276.6L483.1,283.1L474.9,297.9L465.1,309.3L458.5,319.2L455.2,327.4L453.6,336.0L440.5,334.6L437.2,331.3L432.3,324.1L426.6,317.5L424.4,307.7L425.7,297.9L429.0,294.6L435.6,289.7L440.5,284.8ZM424.9,334.1L438.9,338.2L453.6,340.7L453.6,347.0L447.0,350.3L433.9,348.7L425.7,342.1ZM414.3,335.6L422.1,337.2L423.7,347.0L419.2,348.7L414.3,343.8ZM411.0,315.1L419.2,317.5L427.4,322.5L426.6,327.4L417.5,325.7L411.0,322.5ZM397.9,320.8L403.6,320.0L404.4,327.4L398.7,329.8ZM382.3,339.7L391.3,330.7L402.8,337.2L411.0,342.1L409.3,348.7L394.6,350.3L384.8,347.0ZM378.2,351.5L389.7,349.8L393.0,359.7L389.7,369.5L379.8,367.9L377.4,359.7ZM393.0,355.6L407.7,355.6L411.0,361.3L417.5,372.8L419.2,379.3L406.0,382.6L394.6,381.0L389.7,372.8L391.3,364.6ZM415.9,353.1L424.1,352.3L435.6,354.8L433.9,364.6L427.4,372.8L420.8,371.1L415.1,361.3ZM436.4,354.8L447.0,353.9L456.9,359.7L466.7,367.9L478.2,381.0L483.1,389.2L479.8,399.0L474.9,405.6L466.7,402.3L461.8,394.1L456.9,397.4L455.2,394.1L461.8,382.6L455.2,377.7L447.0,376.1L440.5,371.1L437.2,363.0Z" fill="#eeede9" stroke="#d7d7d5" stroke-width="0.9" stroke-linejoin="round"/>
<path d="M661.8,451.3L661.8,457.2L665.1,462.7L666.4,462.9L664.3,467.0L665.1,469.1L667.5,470.7L672.5,470.5L672.3,467.0L670.8,463.8L671.3,461.2L670.0,459.5L668.0,456.8L668.4,453.8L670.8,452.0L670.8,448.4L667.5,447.7L664.3,448.9Z" fill="#fff" stroke="#dcdcda" stroke-width="0.8"/>
<path d="M433.3,448.7L437.4,445.5L439.9,443.6L443.1,443.8L445.1,448.2L442.3,449.2L436.6,448.9L433.3,448.7M440.7,460.1L440.0,455.0L441.5,450.8L444.8,450.3L442.6,456.1L442.3,459.5L440.7,460.1M445.6,450.8L450.5,450.6L453.0,453.8L450.2,456.8L449.0,457.2L447.2,455.0L447.6,452.7L445.6,450.8M447.6,460.1L451.3,459.0L454.6,457.5L454.8,458.4L450.5,460.6L447.6,460.1M453.3,456.6L458.7,454.8L459.2,456.6L454.3,456.8L453.3,456.6M458.7,454.8L462.8,452.0L466.9,448.4L471.0,444.8M353.0,374.4L353.0,410.8L356.3,412.1L359.6,415.0L362.9,412.5L366.1,416.6L370.2,424.2L370.2,427.9M411.2,497.6L407.1,492.7L403.0,488.0L399.7,484.2L396.1,480.6L398.9,485.7L401.4,490.4L403.8,494.9L404.6,496.7M392.2,479.1L396.1,478.7L402.2,481.4L406.8,481.4L409.6,480.4L412.8,484.6L415.3,485.7L417.7,484.2L421.0,488.5L424.8,491.5M629.9,374.0L630.7,381.7L633.1,386.0L632.3,397.8L635.6,401.5L629.5,410.2M629.5,413.4L629.0,419.7L629.9,424.2L627.4,425.1L625.0,429.3L622.5,430.2M622.5,430.2L622.5,434.8L623.3,438.5L621.0,442.8M622.5,436.7L633.1,436.7L635.6,435.1L641.3,434.8L646.2,440.5L649.5,441.8L649.2,445.5L646.6,448.0M621.0,442.8L621.5,445.5L627.4,445.1L629.9,445.1L632.3,449.2L630.2,451.5L632.6,452.2M621.5,445.5L618.4,449.9L620.9,453.8L625.0,455.7L629.0,455.0L630.8,455.7M620.9,458.8L626.6,460.1L629.9,459.5M607.3,430.2L607.9,435.3L608.6,438.0L614.8,441.1L621.0,442.8M611.8,445.5L621.0,444.8M603.8,439.8L606.6,443.6L605.3,446.8L600.4,446.8L596.4,446.5M606.6,443.6L611.8,443.8L611.8,445.5L611.0,449.2L605.3,448.9M593.8,449.9L596.3,450.6L601.2,449.2L599.6,446.5M597.4,443.1L594.5,441.8L593.8,438.5L590.6,439.3L588.1,437.7M593.8,438.5L595.5,434.8L595.5,431.8M589.6,436.9L593.8,435.9M581.1,456.3L585.1,457.7L589.2,458.6M569.6,459.9L573.4,460.1L572.5,464.9L571.7,469.7M596.3,455.4L595.5,452.2L593.8,449.9M601.2,449.2L604.5,448.0L606.4,449.2L606.4,451.1M606.3,451.5L609.7,449.2L615.1,450.6L618.4,449.9M609.7,452.7L615.9,452.9L614.3,458.4M615.6,459.7L617.6,459.0L620.9,458.8M617.1,464.7L618.4,461.9L621.7,461.0L626.6,460.1M617.6,459.0L618.4,461.9M631.5,374.9L625.0,379.0L617.6,377.2L613.5,381.7L610.2,388.0L606.9,394.0L603.7,401.5L604.5,408.5L602.8,415.0M617.6,377.2L622.5,383.8L623.3,390.1M623.6,418.8L629.0,419.7M618.4,424.2L627.4,425.1M618.4,426.5L621.7,428.8M649.2,456.1L652.8,456.6L659.3,459.5L663.4,460.1M655.3,461.4L660.2,461.6L664.3,460.6M657.4,464.4L662.6,467.0L664.3,467.0M643.0,470.5L646.2,470.5L653.5,469.9L656.6,469.1L656.9,464.4L655.3,461.4L652.1,460.3M653.5,469.9L651.2,475.1L647.6,477.3L642.6,479.1M641.3,484.8L644.6,481.0L647.9,479.4L651.2,481.0L657.2,485.4L661.8,485.7M656.6,469.1L658.5,473.1L659.3,478.1L662.6,482.9L663.4,484.0M654.1,508.0L660.2,506.6L669.2,503.7L674.9,502.0L676.5,497.6L674.9,497.2L669.2,494.9M669.5,507.8L670.8,503.7M661.8,451.3L664.3,445.5L667.5,436.7L674.1,439.0L683.9,438.0L684.7,429.9L690.5,428.5L698.7,427.1L704.4,429.9L708.5,428.5L711.8,434.0L718.3,438.5L721.6,439.3L727.3,442.6M727.3,442.6L731.4,439.3L739.6,440.5L744.5,436.7L751.1,439.3L757.6,439.8L760.9,442.3L770.7,440.5L775.2,441.1M775.2,441.1L780.6,434.0L785.5,431.3L792.0,440.5L798.6,446.0L804.3,445.1L798.6,452.7L798.6,457.2L798.1,458.8M727.3,442.6L731.4,446.8L733.1,451.5L741.2,457.2L756.0,460.6L765.8,456.1L769.1,453.1L775.6,449.2L779.7,448.0L775.2,441.1M727.3,442.6L724.0,448.0L719.1,451.5L715.9,457.2L705.2,456.8L700.3,458.8L697.0,461.0L692.1,459.5L688.8,456.1L684.7,455.0L679.8,451.5L675.7,461.0L671.6,459.5M670.8,469.1L675.7,468.0L683.9,471.1L684.2,474.1L683.1,477.1L683.9,481.0L685.1,492.7M683.9,484.2L692.9,484.0L697.8,481.0L700.3,476.1L706.0,470.1L701.1,470.1L692.9,469.5L683.9,471.1M696.2,495.4L700.3,494.0L699.5,488.5L704.4,483.8L706.9,479.1L710.1,474.1L713.4,479.1L716.7,483.8L721.6,486.7L728.1,488.5L734.7,488.1L740.4,485.7L742.9,487.6M706.0,470.1L710.1,474.1L715.0,473.1L715.9,457.2M729.0,499.0L729.8,491.3L734.7,493.1L735.4,500.7M742.9,487.6L738.8,494.9L736.7,497.6L735.4,500.7M742.9,487.6L745.7,493.1L747.0,498.4L749.4,499.3L747.8,501.1L745.3,507.1L745.5,513.9M749.4,499.3L752.7,497.6L757.6,497.0L760.9,499.2M749.4,499.3L752.7,504.6L756.0,504.6L759.3,508.0L760.1,511.4L757.6,517.3M751.9,514.8L756.0,511.7L760.1,511.4M747.8,501.1L750.3,505.8L754.4,505.8L756.8,510.5L751.9,514.8M748.1,524.7L751.2,525.2M581.1,474.1L582.0,479.1L578.3,481.0L569.7,486.3L569.7,488.9L576.1,493.1L585.6,500.2L590.6,503.3L603.7,495.8M562.4,488.1L569.7,488.1L569.7,491.3L564.3,491.3L564.3,495.8L562.7,499.7L556.2,499.7M576.1,493.1L575.0,508.0L565.2,509.7L564.0,510.9L557.3,508.0M597.9,470.1L597.6,475.1L599.6,480.0L600.4,482.9L599.9,489.4L603.7,495.8L608.6,496.7L623.3,502.8L625.0,502.0L625.0,498.4M625.0,480.8L625.0,498.4L644.4,498.4M623.3,502.8L620.9,512.2L622.5,519.8L628.2,519.4L638.1,518.9L639.7,521.4L641.3,518.1L643.8,511.7L646.2,506.3M608.6,496.7L609.4,501.1L606.3,513.1M590.6,503.3L589.7,509.7L585.6,513.4L589.7,516.1L597.1,513.9L606.3,513.1L607.8,516.4L603.7,523.1L598.7,527.2M564.0,510.9L565.2,514.8L570.9,518.4L575.0,518.3L579.1,519.3L584.0,517.3L585.6,513.4M579.1,527.2L579.6,517.3M585.6,525.6L584.8,517.3M643.8,511.7L654.4,514.8M654.1,517.3L656.1,520.6L662.6,522.3L657.7,527.2L652.5,528.8M642.1,527.2L647.9,529.7L652.5,528.8L651.2,529.2L651.2,538.0M607.8,520.6L610.2,523.1L620.9,517.4L629.0,527.2L625.0,527.2L615.9,527.2L610.2,532.1L600.1,531.8M603.7,543.6L613.5,540.3L612.7,529.7L615.9,527.2M629.0,527.2L634.0,529.7L632.3,537.9L632.3,542.8L634.0,549.0L630.7,549.4L633.1,556.9L628.2,554.7L620.0,553.5L620.0,556.9L623.3,556.9L620.0,564.5M603.7,545.2L611.0,547.7L619.2,547.4L620.0,553.5M603.3,564.2L618.1,565.4L621.7,564.7L625.8,565.0L629.9,563.0L633.6,561.3L637.9,563.2L635.3,573.1L636.4,581.0M639.4,537.0L645.4,540.8L648.4,543.1M639.4,537.0L633.1,537.0L634.0,529.7L639.7,528.8L642.1,527.2M639.7,528.8L639.7,533.8L639.4,537.0M650.2,552.5L640.5,554.4L638.1,551.0L634.0,549.0M640.5,554.4L638.1,558.6L633.6,561.3M625.8,565.0L629.0,569.7L632.2,572.5L635.3,573.1M616.8,565.4L618.4,565.9L616.8,572.4L616.8,577.4M611.0,584.3L616.8,583.8L616.8,577.4L625.8,578.6L628.2,575.9L632.2,572.5M465.2,516.4L465.6,523.1L469.3,524.1L472.9,525.2L473.4,532.1L474.3,533.4M454.9,532.5L457.9,534.7L460.7,535.6L463.6,537.9L469.3,542.0L470.2,542.3L469.3,537.0L470.2,533.4L474.3,533.4L479.2,528.8L484.1,528.0L485.7,527.2L484.9,521.4M485.7,527.2L490.6,532.1L495.5,532.1L499.5,528.4M490.6,525.6L492.3,532.1M495.5,526.0L495.5,531.6M452.5,541.0L455.4,543.6L460.7,535.6M469.3,542.0L464.4,546.1L463.6,550.2L468.5,553.5L471.0,553.5L471.0,561.1L470.2,564.5L469.0,566.2M471.0,553.5L476.7,551.9L482.4,557.7L485.7,562.8L489.0,562.8L489.8,568.8M470.2,564.5L471.8,570.6L474.3,573.8L477.5,572.4L481.6,572.7L483.3,568.8L489.0,568.8M481.6,572.7L489.0,576.8L493.1,581.9L494.7,578.8L495.2,575.9L493.9,573.2L489.8,572.4L489.0,568.8M494.7,578.8L492.3,583.2L489.7,587.3L488.3,592.7M489.7,587.3L496.4,591.7L496.7,594.1M474.3,573.8L471.8,577.7L470.2,583.2L469.3,592.7L467.7,600.7L466.9,609.2L466.6,615.8L465.6,622.8L463.9,630.3L466.1,634.1L471.8,636.8M433.3,511.4L433.3,505.8L434.9,505.8L437.9,505.8L437.9,509.0M437.9,509.0L440.7,512.4L444.8,512.2L446.7,517.3M428.4,442.1L428.1,443.1" fill="none" stroke="#d9d9d7" stroke-width="0.9"/>
<path d="M396.0,508.0C395.3,504.2 397.5,499.7 399.0,496.0C400.5,492.3 402.8,489.3 405.0,486.0C407.2,482.7 408.7,479.2 412.0,476.0C415.3,472.8 419.5,470.2 425.0,467.0C430.5,463.8 437.5,459.8 445.0,457.0C452.5,454.2 460.8,451.7 470.0,450.0C479.2,448.3 492.5,447.2 500.0,447.0C507.5,446.8 510.0,447.5 515.0,449.0C520.0,450.5 526.5,453.8 530.0,456.0C533.5,458.2 535.0,459.3 536.0,462.0C537.0,464.7 536.3,469.0 536.0,472.0C535.7,475.0 534.8,475.8 534.0,480.0C533.2,484.2 531.6,493.1 531.0,497.0C530.4,500.9 529.6,500.9 530.3,503.4C531.0,505.9 533.3,509.6 535.0,512.0C536.7,514.4 539.4,515.5 540.4,518.0C541.4,520.5 541.6,524.0 541.0,527.0C540.4,530.0 539.7,533.6 537.0,536.0C534.3,538.4 530.3,540.4 525.0,541.5C519.7,542.6 512.5,542.5 505.0,542.5C497.5,542.5 488.3,541.9 480.0,541.5C471.7,541.1 463.0,540.8 455.0,540.0C447.0,539.2 438.7,538.8 432.0,537.0C425.3,535.2 419.8,532.0 415.0,529.0C410.2,526.0 406.2,522.5 403.0,519.0C399.8,515.5 396.7,511.8 396.0,508.0Z" fill="#eeede9"/>
<path d="M401.0,504.7C400.8,501.4 402.4,498.1 404.0,495.0C405.6,491.9 407.1,489.5 410.4,486.0C413.7,482.5 418.9,477.2 424.0,474.0C429.1,470.8 435.3,469.1 441.0,467.0C446.7,464.9 452.3,462.8 458.0,461.3C463.7,459.8 469.3,458.5 475.0,458.0C480.7,457.5 486.3,457.4 492.0,458.4C497.7,459.4 504.6,461.2 509.0,463.9C513.4,466.6 516.4,470.3 518.4,474.8C520.4,479.3 520.6,486.2 521.2,491.0C521.8,495.8 521.2,499.9 522.0,503.4C522.8,506.9 523.9,508.8 526.0,512.0C528.1,515.2 533.3,519.1 534.5,522.4C535.7,525.7 534.9,529.4 533.0,532.0C531.1,534.6 527.7,536.8 523.0,538.0C518.3,539.2 512.2,539.0 505.0,539.0C497.8,539.0 487.5,538.5 480.0,538.0C472.5,537.5 466.7,536.9 460.0,536.0C453.3,535.1 447.2,535.1 440.0,532.8C432.8,530.5 422.8,525.0 417.0,522.0C411.2,519.0 407.7,517.9 405.0,515.0C402.3,512.1 401.2,508.0 401.0,504.7Z" fill="#d8e7f5"/>
<path d="M516.7,500.0C516.8,501.1 516.8,502.2 517.2,503.4C517.5,504.6 518.2,505.8 518.7,507.0C519.3,508.3 519.6,509.5 520.4,510.8C521.2,512.2 522.4,513.7 523.6,515.2C524.7,516.8 526.6,518.6 527.2,520.2C527.8,521.7 527.2,523.0 527.1,524.4C526.9,525.8 527.3,527.4 526.5,528.6C525.8,529.8 524.1,530.6 522.7,531.5C521.3,532.3 520.0,533.2 518.3,533.8C516.5,534.3 514.3,534.6 512.2,534.8C510.1,534.9 507.7,534.8 505.6,534.8C503.6,534.8 501.8,534.9 500.0,534.9C498.2,534.8 496.4,534.7 494.7,534.6C493.1,534.5 491.6,534.5 490.2,534.4C488.8,534.3 487.5,534.3 486.2,534.2C484.9,534.1 483.8,534.1 482.7,534.0C481.5,534.0 480.5,533.9 479.4,533.9C478.4,533.8 477.5,533.8 476.5,533.7C475.6,533.7 474.6,533.6 473.7,533.5C472.8,533.4 472.0,533.3 471.2,533.2C470.4,533.1 469.6,533.1 468.8,533.0C468.0,532.9 467.3,532.8 466.6,532.8C465.9,532.7 465.2,532.6 464.5,532.6C463.8,532.5 463.2,532.5 462.5,532.4C461.9,532.3 461.3,532.3 460.6,532.2C460.0,532.2 459.4,532.1 458.8,532.0C458.2,532.0 457.6,531.9 457.0,531.8C456.5,531.7 455.9,531.6 455.3,531.5C454.7,531.4 454.2,531.4 453.6,531.3C453.1,531.2 452.5,531.1 452.0,531.1C451.5,531.0 450.9,530.9 450.4,530.8C449.8,530.7 449.3,530.7 448.8,530.6C448.3,530.5 447.7,530.4 447.2,530.4C446.7,530.3 446.1,530.2 445.6,530.1C445.1,530.1 444.5,530.0 444.0,529.9C443.4,529.8 442.9,529.8 442.4,529.7C441.8,529.6 441.3,529.5 440.7,529.3C440.2,529.2 439.7,528.9 439.2,528.7C438.7,528.5 438.2,528.3 437.7,528.1C437.1,527.9 436.6,527.7 436.1,527.5C435.6,527.3 435.1,527.1 434.5,526.9C434.0,526.7 433.5,526.5 432.9,526.2C432.4,526.0 431.9,525.8 431.3,525.5C430.8,525.3 430.2,525.0 429.7,524.8C429.1,524.6 428.5,524.3 427.9,524.1C427.4,523.8 426.8,523.5 426.1,523.3C425.5,523.0 424.9,522.7 424.3,522.5C423.6,522.2 422.9,521.9 422.3,521.6C421.6,521.3 420.8,521.0 420.2,520.7C419.5,520.3 418.8,519.9 418.1,519.5C417.5,519.2 416.8,518.7 416.1,518.3C415.3,517.9 414.6,517.5 413.8,517.0C413.1,516.5 412.2,516.1 411.4,515.6C410.6,515.1 409.5,514.6 408.9,514.0C408.3,513.4 408.1,512.6 407.8,511.8C407.4,511.1 407.1,510.4 406.8,509.6C406.5,508.8 406.1,508.1 405.8,507.3C405.5,506.5 405.1,505.8 405.0,504.9C404.9,504.1 405.2,503.3 405.4,502.4C405.6,501.6 405.9,500.8 406.1,500.0C406.3,499.2 406.6,498.4 406.8,497.6C407.0,496.9 407.1,496.1 407.5,495.3C407.9,494.6 408.5,493.9 409.0,493.2C409.5,492.5 409.9,491.8 410.4,491.2C410.9,490.5 411.3,489.9 411.8,489.2C412.2,488.6 412.6,488.0 413.1,487.4C413.6,486.8 414.2,486.2 414.7,485.7C415.3,485.2 415.9,484.7 416.5,484.2C417.0,483.7 417.6,483.2 418.1,482.7C418.6,482.3 419.2,481.8 419.7,481.3C420.2,480.9 420.7,480.4 421.2,480.0C421.7,479.6 422.2,479.1 422.7,478.7C423.2,478.3 423.6,477.8 424.1,477.4C424.6,477.0 425.1,476.6 425.6,476.2C426.1,475.9 426.7,475.6 427.3,475.3C427.9,475.1 428.5,474.8 429.1,474.6C429.7,474.3 430.3,474.1 430.8,473.8C431.4,473.6 431.9,473.4 432.5,473.1C433.0,472.9 433.6,472.7 434.1,472.5C434.7,472.2 435.2,472.0 435.7,471.8C436.2,471.6 436.8,471.4 437.3,471.1C437.8,470.9 438.4,470.8 438.9,470.6C439.4,470.4 439.9,470.2 440.5,470.0C441.0,469.8 441.5,469.6 442.1,469.4C442.6,469.2 443.1,469.0 443.7,468.9C444.2,468.7 444.7,468.5 445.3,468.4C445.8,468.2 446.4,468.0 446.9,467.8C447.5,467.7 448.0,467.5 448.6,467.3C449.1,467.1 449.7,467.0 450.3,466.8C450.8,466.6 451.4,466.4 452.0,466.2C452.6,466.1 453.2,465.9 453.8,465.7C454.4,465.5 455.0,465.3 455.7,465.2C456.3,465.0 456.9,464.8 457.6,464.6C458.3,464.5 458.9,464.4 459.6,464.3C460.3,464.1 461.0,464.0 461.7,463.9C462.4,463.8 463.1,463.6 463.9,463.5C464.6,463.4 465.4,463.2 466.2,463.1C467.0,462.9 467.8,462.8 468.6,462.6C469.5,462.5 470.4,462.3 471.2,462.2C472.1,462.1 473.0,462.0 473.9,462.0C474.8,462.0 475.7,462.1 476.6,462.1C477.5,462.1 478.5,462.1 479.5,462.2C480.5,462.2 481.5,462.2 482.6,462.3C483.6,462.3 484.8,462.3 485.9,462.3C487.0,462.4 488.2,462.5 489.3,462.7C490.4,462.9 491.3,463.3 492.4,463.6C493.4,464.0 494.5,464.3 495.6,464.7C496.8,465.0 497.9,465.4 499.1,465.7C500.4,466.1 501.9,466.4 502.9,466.9C504.0,467.5 504.8,468.3 505.6,469.0C506.5,469.8 507.2,470.6 508.0,471.5C508.8,472.3 509.5,473.2 510.2,474.1C511.0,475.0 511.9,475.8 512.4,476.8C512.9,477.8 513.0,479.0 513.2,480.1C513.5,481.2 513.7,482.3 514.0,483.4C514.2,484.5 514.4,485.6 514.7,486.7C514.9,487.8 515.2,488.9 515.4,490.0C515.6,491.1 515.8,492.2 516.0,493.3C516.1,494.4 516.2,495.5 516.3,496.6C516.5,497.7 516.6,498.9 516.7,500.0Z" fill="#c0d8ed"/>
<path d="M511.6,500.0C511.8,501.0 511.9,502.1 512.2,503.2C512.5,504.2 513.1,505.3 513.5,506.5C514.0,507.6 514.3,508.7 515.0,510.0C515.6,511.2 516.5,512.5 517.4,513.9C518.3,515.3 519.8,516.9 520.2,518.3C520.7,519.7 520.3,520.9 520.3,522.2C520.2,523.5 520.6,525.0 519.9,526.1C519.2,527.1 517.6,527.9 516.3,528.6C514.9,529.4 513.6,530.1 511.9,530.5C510.2,531.0 508.2,531.2 506.2,531.3C504.1,531.4 501.7,531.1 499.7,531.0C497.8,530.9 496.1,530.9 494.4,530.8C492.7,530.7 491.0,530.5 489.6,530.4C488.1,530.3 486.8,530.3 485.5,530.2C484.3,530.1 483.1,530.1 482.0,530.0C480.9,529.9 479.8,529.9 478.9,529.8C477.9,529.8 476.9,529.7 476.0,529.7C475.1,529.6 474.3,529.6 473.4,529.5C472.6,529.5 471.8,529.4 471.0,529.3C470.2,529.2 469.5,529.2 468.8,529.1C468.1,529.0 467.4,529.0 466.7,528.9C466.1,528.8 465.4,528.8 464.8,528.7C464.2,528.7 463.6,528.6 463.0,528.5C462.4,528.5 461.8,528.5 461.2,528.4C460.7,528.4 460.1,528.3 459.6,528.3C459.0,528.2 458.5,528.2 458.0,528.1C457.5,528.1 456.9,528.0 456.4,527.9C455.9,527.9 455.4,527.8 454.9,527.7C454.4,527.7 453.9,527.6 453.4,527.6C453.0,527.5 452.5,527.4 452.0,527.4C451.5,527.3 451.0,527.3 450.6,527.2C450.1,527.2 449.6,527.1 449.2,527.0C448.7,527.0 448.2,526.9 447.7,526.9C447.3,526.8 446.8,526.8 446.3,526.7C445.8,526.6 445.4,526.6 444.9,526.5C444.4,526.5 443.9,526.4 443.4,526.4C443.0,526.3 442.5,526.2 442.0,526.1C441.5,526.0 441.0,525.8 440.6,525.7C440.1,525.5 439.6,525.4 439.1,525.3C438.6,525.1 438.1,525.0 437.7,524.8C437.2,524.7 436.7,524.5 436.2,524.4C435.7,524.2 435.2,524.0 434.7,523.8C434.2,523.6 433.7,523.4 433.2,523.2C432.7,523.0 432.2,522.8 431.7,522.6C431.1,522.4 430.6,522.2 430.0,522.0C429.5,521.7 428.9,521.5 428.3,521.3C427.8,521.1 427.2,520.8 426.5,520.6C425.9,520.4 425.3,520.1 424.6,519.9C424.0,519.6 423.3,519.4 422.7,519.1C422.0,518.7 421.5,518.4 420.8,518.0C420.2,517.6 419.6,517.2 418.9,516.8C418.3,516.5 417.6,516.1 416.9,515.6C416.2,515.2 415.4,514.8 414.7,514.3C414.0,513.8 413.0,513.4 412.5,512.8C411.9,512.3 411.8,511.5 411.4,510.9C411.1,510.2 410.8,509.5 410.4,508.8C410.1,508.1 409.7,507.5 409.4,506.7C409.1,506.0 408.8,505.3 408.7,504.5C408.7,503.8 409.0,503.0 409.1,502.2C409.3,501.5 409.6,500.7 409.8,500.0C410.0,499.3 410.2,498.5 410.4,497.8C410.6,497.1 410.6,496.4 411.0,495.7C411.3,495.0 411.8,494.3 412.3,493.7C412.7,493.1 413.2,492.4 413.6,491.8C414.0,491.2 414.5,490.6 414.9,490.1C415.3,489.5 415.7,488.9 416.1,488.3C416.5,487.8 417.0,487.3 417.5,486.8C418.0,486.3 418.6,485.8 419.1,485.4C419.6,484.9 420.2,484.5 420.6,484.0C421.1,483.6 421.6,483.2 422.1,482.7C422.6,482.3 423.1,481.9 423.5,481.5C424.0,481.1 424.4,480.7 424.9,480.3C425.3,479.9 425.8,479.5 426.2,479.1C426.7,478.7 427.1,478.4 427.6,478.0C428.1,477.7 428.7,477.5 429.2,477.2C429.8,477.0 430.3,476.8 430.9,476.5C431.4,476.3 431.9,476.1 432.4,475.8C433.0,475.6 433.5,475.4 434.0,475.2C434.5,475.0 435.0,474.7 435.5,474.5C436.0,474.3 436.4,474.1 436.9,473.9C437.4,473.7 437.9,473.5 438.4,473.3C438.9,473.1 439.4,473.0 439.9,472.8C440.4,472.7 440.9,472.5 441.4,472.3C441.9,472.2 442.4,472.0 442.8,471.8C443.3,471.7 443.8,471.5 444.3,471.4C444.8,471.3 445.3,471.1 445.8,471.0C446.3,470.8 446.8,470.7 447.3,470.5C447.8,470.4 448.3,470.2 448.9,470.1C449.4,469.9 449.9,469.8 450.4,469.6C450.9,469.5 451.5,469.3 452.0,469.2C452.5,469.0 453.1,468.9 453.6,468.8C454.2,468.6 454.8,468.5 455.3,468.4C455.9,468.2 456.5,468.1 457.1,467.9C457.7,467.8 458.3,467.7 458.9,467.7C459.5,467.6 460.1,467.5 460.7,467.4C461.4,467.3 462.0,467.2 462.7,467.0C463.4,466.9 464.1,466.8 464.8,466.7C465.5,466.6 466.2,466.5 467.0,466.4C467.7,466.3 468.5,466.2 469.3,466.1C470.0,466.0 470.8,466.0 471.6,466.0C472.4,466.0 473.2,466.0 474.0,466.1C474.9,466.1 475.7,466.1 476.6,466.2C477.5,466.2 478.4,466.2 479.3,466.2C480.3,466.3 481.3,466.3 482.3,466.3C483.3,466.4 484.4,466.5 485.4,466.6C486.3,466.8 487.2,467.1 488.2,467.4C489.2,467.7 490.1,468.0 491.2,468.3C492.2,468.6 493.2,468.9 494.4,469.2C495.5,469.6 496.8,469.8 497.8,470.2C498.8,470.7 499.6,471.4 500.4,472.1C501.2,472.7 502.0,473.4 502.8,474.1C503.5,474.9 504.2,475.7 504.8,476.5C505.4,477.3 506.1,478.1 506.6,479.1C507.0,480.0 507.2,481.0 507.5,482.0C507.8,483.0 508.0,483.9 508.3,484.9C508.6,485.9 508.9,486.9 509.1,487.9C509.4,488.8 509.7,489.8 510.0,490.8C510.2,491.8 510.4,492.8 510.6,493.8C510.8,494.9 511.0,495.9 511.1,496.9C511.3,497.9 511.5,499.0 511.6,500.0Z" fill="#9ac8e1"/>
<path d="M506.6,500.0C506.8,501.0 507.0,501.9 507.2,502.9C507.5,503.9 507.9,504.9 508.3,505.9C508.7,507.0 509.1,508.0 509.6,509.1C510.0,510.2 510.7,511.4 511.3,512.6C511.9,513.8 512.9,515.2 513.2,516.4C513.6,517.6 513.5,518.8 513.5,520.0C513.5,521.2 513.9,522.6 513.3,523.5C512.7,524.5 511.1,525.1 509.8,525.8C508.6,526.4 507.2,527.0 505.6,527.3C503.9,527.6 502.1,527.8 500.1,527.8C498.2,527.8 495.7,527.4 493.9,527.2C492.0,527.0 490.3,526.9 488.8,526.7C487.2,526.6 485.7,526.3 484.4,526.2C483.1,526.1 482.0,526.1 480.9,526.0C479.8,525.9 478.7,525.8 477.8,525.8C476.8,525.7 475.9,525.7 475.1,525.6C474.2,525.6 473.4,525.5 472.6,525.4C471.8,525.4 471.1,525.4 470.4,525.3C469.7,525.2 469.0,525.2 468.3,525.1C467.6,525.1 467.0,525.0 466.4,525.0C465.8,524.9 465.2,524.8 464.6,524.8C464.1,524.7 463.5,524.7 463.0,524.7C462.4,524.6 461.9,524.6 461.4,524.5C460.9,524.5 460.4,524.4 459.9,524.4C459.4,524.4 459.0,524.3 458.5,524.3C458.0,524.3 457.6,524.2 457.1,524.2C456.7,524.2 456.3,524.1 455.8,524.1C455.4,524.0 454.9,524.0 454.5,524.0C454.1,523.9 453.7,523.9 453.2,523.8C452.8,523.8 452.4,523.8 452.0,523.7C451.6,523.7 451.2,523.6 450.8,523.6C450.4,523.6 449.9,523.5 449.5,523.5C449.1,523.5 448.7,523.4 448.3,523.4C447.9,523.3 447.5,523.3 447.1,523.3C446.6,523.2 446.2,523.2 445.8,523.1C445.4,523.1 444.9,523.1 444.5,523.0C444.1,523.0 443.7,522.9 443.2,522.9C442.8,522.8 442.4,522.7 441.9,522.6C441.5,522.6 441.0,522.5 440.6,522.4C440.1,522.3 439.7,522.2 439.2,522.1C438.8,522.0 438.3,521.9 437.8,521.8C437.4,521.7 436.9,521.5 436.5,521.3C436.0,521.2 435.6,521.0 435.1,520.9C434.6,520.7 434.1,520.5 433.7,520.4C433.2,520.2 432.7,520.0 432.1,519.9C431.6,519.7 431.1,519.5 430.5,519.3C430.0,519.1 429.4,518.9 428.8,518.7C428.3,518.6 427.6,518.4 427.0,518.1C426.4,517.9 425.8,517.7 425.2,517.4C424.6,517.1 424.1,516.8 423.5,516.4C423.0,516.1 422.4,515.7 421.8,515.4C421.2,515.0 420.6,514.7 420.0,514.3C419.3,513.9 418.6,513.5 418.0,513.1C417.3,512.6 416.6,512.2 416.1,511.7C415.6,511.1 415.4,510.5 415.1,509.9C414.7,509.3 414.4,508.7 414.1,508.1C413.7,507.4 413.3,506.8 413.0,506.2C412.8,505.5 412.5,504.8 412.5,504.2C412.4,503.5 412.7,502.7 412.9,502.0C413.0,501.4 413.2,500.7 413.4,500.0C413.6,499.3 413.8,498.7 413.9,498.0C414.1,497.3 414.2,496.7 414.4,496.1C414.7,495.4 415.2,494.8 415.6,494.2C416.0,493.6 416.4,493.1 416.8,492.5C417.2,492.0 417.6,491.4 418.0,490.9C418.4,490.3 418.7,489.8 419.1,489.3C419.5,488.8 419.9,488.3 420.3,487.8C420.8,487.4 421.3,487.0 421.8,486.5C422.3,486.1 422.7,485.7 423.2,485.3C423.6,484.9 424.1,484.5 424.5,484.1C425.0,483.8 425.4,483.4 425.8,483.0C426.3,482.6 426.7,482.3 427.1,481.9C427.5,481.5 427.9,481.2 428.3,480.8C428.7,480.5 429.2,480.1 429.6,479.9C430.1,479.6 430.6,479.4 431.1,479.1C431.6,478.9 432.1,478.7 432.6,478.5C433.1,478.3 433.6,478.0 434.0,477.8C434.5,477.6 435.0,477.4 435.4,477.2C435.9,477.0 436.4,476.8 436.8,476.6C437.3,476.4 437.7,476.2 438.1,476.0C438.6,475.8 439.0,475.6 439.5,475.5C440.0,475.3 440.4,475.2 440.9,475.1C441.4,475.0 441.8,474.8 442.3,474.7C442.7,474.6 443.2,474.4 443.6,474.3C444.1,474.2 444.6,474.1 445.0,473.9C445.5,473.8 445.9,473.7 446.4,473.6C446.8,473.5 447.3,473.3 447.8,473.2C448.2,473.1 448.7,473.0 449.1,472.8C449.6,472.7 450.1,472.6 450.6,472.5C451.0,472.3 451.5,472.2 452.0,472.1C452.5,472.0 453.0,471.9 453.5,471.8C454.0,471.7 454.5,471.6 455.0,471.5C455.5,471.5 456.0,471.3 456.6,471.3C457.1,471.2 457.6,471.1 458.2,471.1C458.7,471.0 459.2,470.9 459.8,470.8C460.4,470.8 461.0,470.7 461.6,470.6C462.1,470.5 462.8,470.4 463.4,470.4C464.0,470.3 464.7,470.2 465.3,470.1C466.0,470.0 466.6,470.0 467.3,470.0C468.0,470.0 468.6,470.0 469.3,470.0C470.0,470.0 470.7,470.0 471.4,470.1C472.2,470.1 472.9,470.1 473.7,470.1C474.5,470.2 475.3,470.2 476.1,470.2C476.9,470.3 477.8,470.3 478.7,470.4C479.6,470.4 480.6,470.4 481.4,470.6C482.3,470.7 483.1,471.0 484.0,471.2C484.9,471.4 485.8,471.7 486.7,471.9C487.6,472.2 488.6,472.4 489.6,472.7C490.6,473.0 491.8,473.2 492.7,473.6C493.6,474.0 494.4,474.5 495.2,475.1C496.0,475.6 496.9,476.1 497.6,476.8C498.3,477.4 498.8,478.2 499.4,478.9C499.9,479.7 500.4,480.5 500.8,481.3C501.1,482.1 501.4,483.0 501.7,483.8C502.0,484.7 502.3,485.6 502.6,486.4C503.0,487.3 503.3,488.2 503.6,489.0C503.9,489.9 504.3,490.8 504.5,491.7C504.8,492.6 505.1,493.5 505.3,494.4C505.5,495.3 505.7,496.2 505.9,497.2C506.1,498.1 506.3,499.0 506.6,500.0Z" fill="#6badd6"/>
<path d="M501.5,500.0C501.8,500.9 502.0,501.7 502.3,502.6C502.6,503.5 502.8,504.4 503.1,505.4C503.4,506.3 503.8,507.3 504.1,508.3C504.5,509.2 504.8,510.3 505.2,511.3C505.5,512.3 506.0,513.5 506.3,514.5C506.5,515.6 506.6,516.7 506.7,517.8C506.8,518.8 507.2,520.1 506.7,521.0C506.2,521.9 504.7,522.4 503.4,522.9C502.2,523.4 500.8,523.8 499.2,524.0C497.6,524.3 495.9,524.4 494.1,524.3C492.2,524.2 489.8,523.6 488.0,523.4C486.2,523.1 484.6,522.9 483.1,522.6C481.7,522.4 480.4,522.2 479.2,522.0C478.0,521.9 477.1,521.9 476.2,521.8C475.2,521.7 474.4,521.6 473.6,521.6C472.8,521.5 472.0,521.4 471.3,521.4C470.5,521.3 469.8,521.3 469.2,521.2C468.5,521.2 467.9,521.1 467.3,521.1C466.7,521.0 466.1,521.0 465.6,520.9C465.1,520.9 464.5,520.9 464.0,520.8C463.5,520.8 463.0,520.7 462.5,520.7C462.1,520.7 461.6,520.6 461.2,520.6C460.7,520.6 460.3,520.5 459.9,520.5C459.4,520.5 459.0,520.4 458.6,520.4C458.2,520.4 457.8,520.4 457.5,520.4C457.1,520.3 456.7,520.3 456.3,520.3C455.9,520.3 455.6,520.3 455.2,520.2C454.8,520.2 454.5,520.2 454.1,520.2C453.8,520.2 453.4,520.1 453.1,520.1C452.7,520.1 452.4,520.1 452.0,520.1C451.6,520.0 451.3,520.0 451.0,520.0C450.6,520.0 450.3,520.0 449.9,519.9C449.6,519.9 449.2,519.9 448.9,519.9C448.5,519.9 448.1,519.8 447.8,519.8C447.4,519.8 447.1,519.8 446.7,519.8C446.3,519.7 446.0,519.7 445.6,519.7C445.2,519.7 444.8,519.7 444.5,519.6C444.1,519.6 443.7,519.6 443.3,519.6C442.9,519.6 442.5,519.5 442.1,519.5C441.6,519.5 441.2,519.5 440.8,519.4C440.3,519.4 439.9,519.3 439.5,519.3C439.1,519.2 438.7,519.0 438.3,518.9C437.8,518.8 437.4,518.7 437.0,518.5C436.5,518.4 436.1,518.3 435.6,518.2C435.2,518.0 434.7,517.9 434.2,517.8C433.7,517.6 433.3,517.5 432.7,517.3C432.2,517.2 431.7,517.0 431.1,516.9C430.6,516.7 430.0,516.6 429.4,516.4C428.8,516.2 428.2,516.0 427.7,515.8C427.1,515.5 426.7,515.2 426.2,514.9C425.7,514.6 425.2,514.3 424.7,513.9C424.1,513.6 423.6,513.3 423.0,512.9C422.5,512.5 421.8,512.2 421.3,511.8C420.7,511.4 420.1,511.0 419.7,510.5C419.3,510.0 419.0,509.5 418.7,508.9C418.4,508.4 418.0,507.8 417.7,507.3C417.3,506.7 416.9,506.2 416.6,505.6C416.4,505.0 416.2,504.4 416.2,503.8C416.2,503.1 416.5,502.5 416.6,501.9C416.8,501.2 416.9,500.6 417.1,500.0C417.2,499.4 417.4,498.8 417.5,498.2C417.6,497.6 417.7,497.0 417.9,496.4C418.1,495.8 418.5,495.3 418.9,494.8C419.2,494.2 419.6,493.7 420.0,493.2C420.4,492.7 420.7,492.2 421.1,491.7C421.4,491.2 421.7,490.7 422.1,490.3C422.4,489.8 422.7,489.3 423.1,488.9C423.5,488.5 424.0,488.1 424.4,487.7C424.9,487.4 425.3,487.0 425.7,486.6C426.1,486.2 426.6,485.9 427.0,485.5C427.4,485.2 427.7,484.8 428.1,484.5C428.5,484.2 428.9,483.8 429.3,483.5C429.7,483.2 430.0,482.8 430.4,482.5C430.8,482.2 431.2,481.9 431.7,481.7C432.1,481.4 432.6,481.3 433.0,481.0C433.5,480.8 433.9,480.6 434.4,480.4C434.8,480.2 435.2,480.0 435.7,479.8C436.1,479.6 436.5,479.4 436.9,479.2C437.3,479.0 437.7,478.9 438.1,478.7C438.6,478.5 438.9,478.3 439.4,478.1C439.8,477.9 440.2,477.8 440.6,477.7C441.0,477.5 441.5,477.5 441.9,477.4C442.3,477.3 442.8,477.2 443.2,477.1C443.6,477.0 444.0,476.9 444.4,476.8C444.9,476.7 445.3,476.6 445.7,476.5C446.1,476.4 446.5,476.3 446.9,476.2C447.4,476.1 447.8,476.0 448.2,475.9C448.6,475.8 449.0,475.7 449.4,475.6C449.9,475.5 450.3,475.4 450.7,475.3C451.1,475.2 451.6,475.1 452.0,475.0C452.4,474.9 452.9,474.9 453.3,474.9C453.8,474.8 454.2,474.8 454.7,474.7C455.1,474.7 455.6,474.6 456.0,474.6C456.5,474.6 457.0,474.5 457.4,474.5C457.9,474.4 458.4,474.4 458.9,474.3C459.4,474.3 459.9,474.2 460.4,474.2C460.9,474.1 461.4,474.1 462.0,474.0C462.5,473.9 463.1,473.9 463.6,473.8C464.2,473.8 464.8,473.8 465.3,473.9C465.9,473.9 466.4,473.9 467.0,474.0C467.6,474.0 468.2,474.0 468.9,474.0C469.5,474.1 470.1,474.1 470.8,474.1C471.5,474.2 472.1,474.2 472.9,474.2C473.6,474.3 474.3,474.3 475.1,474.4C475.9,474.4 476.7,474.4 477.5,474.5C478.3,474.6 479.0,474.8 479.8,475.0C480.6,475.1 481.4,475.3 482.2,475.5C483.0,475.8 483.9,476.0 484.8,476.2C485.7,476.4 486.7,476.6 487.6,476.9C488.4,477.2 489.1,477.7 489.9,478.1C490.7,478.5 491.7,478.9 492.3,479.5C493.0,480.0 493.5,480.7 493.9,481.3C494.4,482.0 494.6,482.8 494.9,483.5C495.3,484.3 495.6,485.0 495.9,485.7C496.3,486.5 496.6,487.2 497.0,487.9C497.3,488.7 497.7,489.5 498.0,490.2C498.4,491.0 498.8,491.7 499.1,492.5C499.4,493.3 499.7,494.1 500.0,495.0C500.2,495.8 500.5,496.6 500.7,497.4C501.0,498.3 501.2,499.1 501.5,500.0Z" fill="#4292c6"/>
<path d="M494.5,500.0C494.7,500.7 494.9,501.5 495.1,502.3C495.3,503.0 495.5,503.8 495.7,504.6C495.8,505.4 496.0,506.2 496.1,507.0C496.3,507.8 496.4,508.6 496.6,509.5C496.8,510.3 497.1,511.2 497.1,512.1C497.1,512.9 496.9,513.7 496.8,514.5C496.6,515.4 496.7,516.3 496.2,517.0C495.7,517.6 494.5,518.1 493.5,518.5C492.5,518.9 491.5,519.3 490.2,519.5C489.0,519.7 487.5,519.7 486.0,519.6C484.5,519.6 482.7,519.2 481.2,519.0C479.8,518.8 478.5,518.6 477.4,518.4C476.2,518.3 475.2,518.1 474.2,518.0C473.3,517.9 472.5,517.9 471.8,517.8C471.0,517.7 470.3,517.7 469.6,517.6C469.0,517.6 468.3,517.5 467.7,517.5C467.1,517.4 466.6,517.4 466.1,517.4C465.5,517.3 465.0,517.3 464.5,517.2C464.0,517.2 463.6,517.2 463.1,517.1C462.7,517.1 462.3,517.1 461.9,517.1C461.4,517.1 461.1,517.0 460.7,517.0C460.3,517.0 459.9,517.0 459.6,517.0C459.2,517.0 458.8,516.9 458.5,516.9C458.2,516.9 457.8,516.9 457.5,516.9C457.2,516.9 456.8,516.9 456.5,516.9C456.2,516.9 455.9,516.9 455.6,516.9C455.3,516.9 455.0,516.9 454.7,516.8C454.4,516.8 454.1,516.8 453.8,516.8C453.5,516.8 453.2,516.8 452.9,516.8C452.6,516.8 452.3,516.8 452.0,516.8C451.7,516.8 451.4,516.8 451.1,516.8C450.8,516.8 450.5,516.8 450.2,516.8C449.9,516.8 449.6,516.7 449.3,516.7C449.0,516.7 448.7,516.7 448.4,516.7C448.1,516.7 447.8,516.7 447.5,516.7C447.2,516.7 446.9,516.7 446.6,516.7C446.3,516.7 445.9,516.7 445.6,516.7C445.3,516.7 444.9,516.7 444.6,516.7C444.2,516.7 443.9,516.7 443.5,516.7C443.1,516.6 442.8,516.7 442.4,516.6C442.0,516.6 441.6,516.6 441.3,516.6C440.9,516.5 440.5,516.4 440.1,516.4C439.7,516.3 439.3,516.2 438.9,516.2C438.5,516.1 438.1,516.0 437.6,516.0C437.2,515.9 436.8,515.8 436.3,515.7C435.8,515.6 435.4,515.5 434.9,515.4C434.4,515.3 433.9,515.2 433.3,515.1C432.8,515.0 432.2,514.9 431.6,514.8C431.0,514.7 430.4,514.6 429.8,514.4C429.2,514.2 428.7,514.0 428.1,513.8C427.5,513.6 426.8,513.4 426.2,513.1C425.6,512.9 425.2,512.5 424.6,512.2C424.1,511.9 423.5,511.5 422.9,511.2C422.3,510.8 421.7,510.4 421.3,510.0C420.9,509.5 420.8,509.0 420.5,508.4C420.2,507.9 419.9,507.4 419.7,506.9C419.4,506.3 419.0,505.8 418.8,505.3C418.7,504.7 418.7,504.1 418.8,503.5C418.9,502.9 419.2,502.3 419.4,501.7C419.5,501.1 419.7,500.6 419.9,500.0C420.1,499.4 420.2,498.9 420.5,498.3C420.7,497.8 420.9,497.3 421.2,496.8C421.5,496.3 421.9,495.8 422.2,495.3C422.6,494.8 423.0,494.4 423.4,493.9C423.7,493.5 424.1,493.0 424.4,492.6C424.8,492.2 425.3,491.8 425.7,491.4C426.1,491.1 426.4,490.7 426.8,490.3C427.2,490.0 427.7,489.7 428.2,489.4C428.6,489.1 429.0,488.8 429.4,488.5C429.8,488.2 430.2,487.9 430.6,487.6C430.9,487.3 431.3,487.1 431.7,486.8C432.0,486.5 432.4,486.3 432.7,486.0C433.1,485.8 433.4,485.5 433.8,485.2C434.1,485.0 434.5,484.8 434.9,484.6C435.3,484.4 435.7,484.2 436.0,484.0C436.4,483.9 436.8,483.7 437.2,483.5C437.5,483.4 437.9,483.2 438.3,483.0C438.6,482.9 439.0,482.7 439.3,482.6C439.7,482.4 440.0,482.2 440.4,482.1C440.7,481.9 441.0,481.8 441.4,481.6C441.7,481.5 442.1,481.3 442.4,481.2C442.8,481.1 443.2,481.0 443.5,480.9C443.9,480.8 444.2,480.7 444.6,480.7C444.9,480.6 445.3,480.5 445.6,480.4C446.0,480.3 446.3,480.2 446.7,480.1C447.0,480.0 447.4,479.9 447.7,479.8C448.1,479.7 448.4,479.6 448.8,479.6C449.1,479.5 449.5,479.4 449.8,479.4C450.2,479.3 450.5,479.3 450.9,479.2C451.3,479.1 451.6,479.0 452.0,479.0C452.4,478.9 452.7,478.9 453.1,478.9C453.5,478.9 453.8,478.9 454.2,478.8C454.6,478.8 455.0,478.8 455.4,478.8C455.8,478.7 456.1,478.7 456.5,478.7C456.9,478.6 457.3,478.6 457.7,478.6C458.1,478.5 458.6,478.5 459.0,478.5C459.4,478.5 459.8,478.4 460.3,478.4C460.7,478.4 461.2,478.3 461.7,478.3C462.1,478.3 462.6,478.3 463.0,478.3C463.5,478.3 464.0,478.4 464.5,478.4C465.0,478.4 465.5,478.5 466.0,478.5C466.5,478.5 467.0,478.6 467.6,478.6C468.1,478.6 468.7,478.6 469.3,478.7C469.9,478.7 470.5,478.7 471.1,478.8C471.7,478.8 472.4,478.8 473.1,478.9C473.8,479.0 474.4,479.1 475.0,479.3C475.7,479.4 476.3,479.6 477.0,479.8C477.7,479.9 478.3,480.1 479.1,480.3C479.8,480.5 480.6,480.7 481.3,481.0C482.0,481.2 482.6,481.6 483.3,482.0C483.9,482.3 484.7,482.6 485.3,483.0C485.9,483.5 486.3,484.0 486.8,484.5C487.2,485.0 487.6,485.6 488.0,486.2C488.3,486.8 488.6,487.4 489.0,488.0C489.3,488.6 489.7,489.2 490.1,489.8C490.4,490.4 490.8,491.0 491.2,491.7C491.5,492.3 492.0,493.0 492.3,493.6C492.6,494.3 492.9,495.0 493.2,495.7C493.4,496.4 493.6,497.1 493.8,497.8C494.0,498.5 494.2,499.3 494.5,500.0Z" fill="#2171b5"/>
<path d="M487.4,500.0C487.6,500.6 487.8,501.2 487.9,501.9C488.1,502.5 488.2,503.2 488.2,503.8C488.3,504.4 488.2,505.1 488.1,505.7C488.1,506.4 488.1,507.0 488.1,507.7C488.0,508.3 488.1,509.0 487.9,509.6C487.7,510.2 487.2,510.8 486.8,511.3C486.4,511.9 486.2,512.5 485.7,512.9C485.2,513.4 484.3,513.7 483.6,514.1C482.9,514.4 482.2,514.8 481.3,514.9C480.3,515.1 479.1,515.1 478.0,515.0C476.8,514.9 475.5,514.7 474.4,514.6C473.4,514.5 472.5,514.3 471.6,514.2C470.7,514.1 470.0,514.0 469.3,514.0C468.5,513.9 467.9,513.9 467.4,513.8C466.8,513.8 466.2,513.7 465.7,513.7C465.2,513.7 464.7,513.6 464.2,513.6C463.8,513.5 463.3,513.5 462.9,513.5C462.5,513.5 462.1,513.4 461.7,513.4C461.4,513.4 461.0,513.3 460.6,513.3C460.3,513.3 460.0,513.3 459.7,513.3C459.4,513.3 459.1,513.3 458.8,513.3C458.5,513.3 458.2,513.3 457.9,513.3C457.7,513.4 457.4,513.4 457.1,513.4C456.9,513.4 456.6,513.4 456.3,513.4C456.1,513.4 455.8,513.4 455.6,513.4C455.3,513.4 455.1,513.4 454.9,513.4C454.6,513.4 454.4,513.4 454.1,513.5C453.9,513.5 453.7,513.5 453.4,513.5C453.2,513.5 452.9,513.5 452.7,513.5C452.5,513.5 452.2,513.5 452.0,513.5C451.8,513.5 451.5,513.5 451.3,513.5C451.1,513.6 450.8,513.6 450.6,513.6C450.3,513.6 450.1,513.6 449.8,513.6C449.6,513.6 449.4,513.6 449.1,513.6C448.9,513.6 448.6,513.6 448.3,513.7C448.1,513.7 447.8,513.7 447.6,513.7C447.3,513.7 447.0,513.7 446.7,513.7C446.5,513.7 446.2,513.7 445.9,513.8C445.6,513.8 445.3,513.8 445.0,513.8C444.7,513.8 444.3,513.8 444.0,513.8C443.7,513.8 443.3,513.9 443.0,513.8C442.7,513.8 442.3,513.8 442.0,513.8C441.6,513.8 441.2,513.8 440.8,513.8C440.5,513.8 440.0,513.8 439.6,513.7C439.2,513.7 438.8,513.7 438.3,513.7C437.9,513.6 437.5,513.6 437.0,513.5C436.5,513.5 436.0,513.4 435.5,513.4C435.0,513.3 434.4,513.3 433.8,513.2C433.2,513.1 432.6,513.1 432.0,513.0C431.3,512.9 430.7,512.8 430.0,512.7C429.3,512.6 428.4,512.6 427.7,512.4C427.1,512.2 426.7,511.8 426.2,511.5C425.6,511.2 425.1,510.9 424.5,510.5C424.0,510.2 423.3,509.9 422.9,509.5C422.5,509.0 422.5,508.5 422.3,508.0C422.1,507.5 421.8,507.0 421.6,506.5C421.4,505.9 421.1,505.4 421.1,504.9C421.0,504.4 421.3,503.8 421.4,503.2C421.6,502.7 421.9,502.1 422.1,501.6C422.3,501.0 422.5,500.5 422.7,500.0C422.9,499.5 423.1,499.0 423.4,498.5C423.7,498.0 424.1,497.6 424.5,497.1C424.8,496.7 425.2,496.2 425.6,495.8C426.0,495.4 426.3,495.0 426.7,494.6C427.1,494.2 427.4,493.9 427.8,493.5C428.2,493.2 428.8,492.9 429.2,492.6C429.7,492.3 430.1,492.0 430.5,491.8C431.0,491.5 431.4,491.3 431.9,491.0C432.3,490.8 432.7,490.6 433.1,490.3C433.4,490.1 433.8,489.9 434.2,489.7C434.5,489.5 434.9,489.3 435.2,489.1C435.6,488.9 435.9,488.7 436.2,488.5C436.5,488.3 436.8,488.1 437.1,488.0C437.5,487.8 437.8,487.6 438.1,487.5C438.4,487.3 438.7,487.2 439.1,487.1C439.4,486.9 439.7,486.8 440.0,486.6C440.3,486.5 440.6,486.4 440.9,486.3C441.2,486.1 441.4,486.0 441.7,485.9C442.0,485.7 442.3,485.6 442.6,485.5C442.9,485.4 443.1,485.2 443.4,485.1C443.7,485.0 444.0,484.9 444.3,484.8C444.5,484.7 444.8,484.6 445.1,484.5C445.4,484.4 445.7,484.3 446.0,484.3C446.2,484.2 446.5,484.1 446.8,484.0C447.1,483.9 447.4,483.8 447.6,483.7C447.9,483.6 448.2,483.5 448.5,483.4C448.8,483.3 449.1,483.3 449.3,483.2C449.6,483.2 449.9,483.2 450.2,483.2C450.5,483.1 450.8,483.1 451.1,483.1C451.4,483.0 451.7,483.0 452.0,483.0C452.3,483.0 452.6,483.0 452.9,483.0C453.2,483.0 453.5,482.9 453.8,482.9C454.1,482.9 454.4,482.9 454.7,482.9C455.0,482.9 455.3,482.9 455.6,482.9C456.0,482.9 456.3,482.9 456.6,482.8C456.9,482.8 457.2,482.8 457.6,482.8C457.9,482.8 458.3,482.8 458.6,482.8C459.0,482.8 459.3,482.7 459.7,482.7C460.0,482.7 460.4,482.8 460.8,482.8C461.1,482.8 461.5,482.8 461.9,482.9C462.3,482.9 462.7,482.9 463.1,482.9C463.5,483.0 463.9,483.0 464.3,483.0C464.8,483.1 465.2,483.1 465.7,483.1C466.1,483.2 466.6,483.2 467.1,483.2C467.6,483.3 468.2,483.3 468.7,483.3C469.2,483.4 469.7,483.4 470.3,483.6C470.8,483.7 471.3,483.8 471.8,484.0C472.3,484.1 472.8,484.3 473.3,484.5C473.9,484.7 474.5,484.8 475.0,485.1C475.6,485.3 476.1,485.5 476.6,485.8C477.1,486.1 477.7,486.3 478.2,486.6C478.7,486.9 479.2,487.3 479.7,487.7C480.1,488.0 480.6,488.4 481.0,488.9C481.4,489.3 481.7,489.8 482.0,490.2C482.4,490.7 482.8,491.2 483.1,491.7C483.5,492.1 483.9,492.6 484.3,493.1C484.7,493.6 485.1,494.2 485.5,494.7C485.9,495.2 486.2,495.8 486.4,496.4C486.7,497.0 486.7,497.6 486.9,498.2C487.1,498.8 487.2,499.4 487.4,500.0Z" fill="#08519c"/>
<path d="M480.4,500.0C480.5,500.5 480.7,501.0 480.8,501.5C480.8,502.0 480.9,502.5 480.8,503.0C480.7,503.5 480.3,504.0 480.1,504.5C479.9,504.9 479.8,505.4 479.5,505.8C479.3,506.3 479.1,506.8 478.7,507.2C478.3,507.5 477.4,507.8 476.9,508.1C476.3,508.4 475.7,508.6 475.2,508.9C474.7,509.2 474.2,509.4 473.7,509.7C473.2,509.9 472.9,510.2 472.3,510.3C471.7,510.5 470.7,510.4 469.9,510.3C469.2,510.3 468.4,510.2 467.7,510.2C467.0,510.1 466.4,510.1 465.8,510.1C465.3,510.0 464.8,510.0 464.3,509.9C463.8,509.9 463.4,509.9 462.9,509.8C462.5,509.8 462.1,509.8 461.8,509.8C461.4,509.7 461.0,509.7 460.7,509.7C460.4,509.7 460.1,509.6 459.8,509.6C459.5,509.6 459.2,509.6 458.9,509.6C458.7,509.5 458.4,509.5 458.2,509.5C457.9,509.5 457.7,509.6 457.5,509.6C457.3,509.6 457.1,509.6 456.9,509.7C456.7,509.7 456.5,509.7 456.3,509.7C456.1,509.8 455.9,509.8 455.8,509.8C455.6,509.8 455.4,509.8 455.2,509.9C455.0,509.9 454.8,509.9 454.7,509.9C454.5,510.0 454.3,510.0 454.1,510.0C453.9,510.0 453.8,510.0 453.6,510.1C453.4,510.1 453.2,510.1 453.1,510.1C452.9,510.1 452.7,510.2 452.5,510.2C452.4,510.2 452.2,510.2 452.0,510.3C451.8,510.3 451.6,510.3 451.5,510.3C451.3,510.3 451.1,510.4 450.9,510.4C450.7,510.4 450.5,510.4 450.3,510.5C450.2,510.5 450.0,510.5 449.8,510.5C449.6,510.6 449.4,510.6 449.2,510.6C449.0,510.6 448.7,510.7 448.5,510.7C448.3,510.7 448.1,510.7 447.9,510.8C447.6,510.8 447.4,510.8 447.2,510.8C446.9,510.9 446.7,510.9 446.4,510.9C446.2,511.0 445.9,511.0 445.6,511.0C445.4,511.1 445.1,511.1 444.8,511.1C444.5,511.2 444.2,511.2 443.8,511.3C443.5,511.3 443.1,511.3 442.8,511.4C442.4,511.4 442.0,511.5 441.6,511.5C441.2,511.6 440.8,511.6 440.4,511.6C440.0,511.6 439.6,511.6 439.1,511.6C438.7,511.6 438.2,511.6 437.7,511.6C437.2,511.6 436.6,511.6 436.0,511.6C435.4,511.6 434.8,511.6 434.1,511.6C433.4,511.6 432.7,511.6 431.9,511.6C431.1,511.6 429.9,511.7 429.2,511.6C428.5,511.5 428.3,511.1 427.7,510.8C427.2,510.5 426.7,510.2 426.2,509.9C425.6,509.6 424.8,509.3 424.5,508.9C424.1,508.5 424.2,508.0 424.0,507.5C423.9,507.0 423.7,506.5 423.6,506.0C423.5,505.5 423.2,505.1 423.3,504.5C423.4,504.0 423.8,503.5 424.1,502.9C424.3,502.4 424.6,501.9 424.8,501.4C425.0,500.9 425.2,500.5 425.5,500.0C425.8,499.5 426.0,499.1 426.4,498.7C426.7,498.2 427.3,497.8 427.7,497.4C428.2,497.1 428.6,496.7 428.9,496.3C429.3,496.0 429.7,495.7 430.1,495.3C430.4,495.0 430.7,494.7 431.2,494.4C431.6,494.2 432.3,494.0 432.8,493.8C433.3,493.6 433.8,493.4 434.3,493.2C434.7,493.0 435.1,492.8 435.6,492.7C436.0,492.5 436.3,492.4 436.7,492.2C437.1,492.1 437.4,491.9 437.8,491.8C438.1,491.7 438.4,491.5 438.8,491.4C439.1,491.3 439.4,491.2 439.7,491.0C440.0,490.9 440.2,490.8 440.5,490.7C440.8,490.6 441.0,490.5 441.3,490.4C441.6,490.3 441.8,490.2 442.1,490.1C442.3,490.0 442.5,489.9 442.8,489.8C443.0,489.7 443.2,489.6 443.5,489.5C443.7,489.4 443.9,489.3 444.1,489.2C444.4,489.1 444.6,489.0 444.8,488.9C445.0,488.8 445.2,488.7 445.4,488.6C445.7,488.6 445.9,488.5 446.1,488.4C446.3,488.3 446.5,488.2 446.7,488.1C446.9,488.0 447.1,487.9 447.3,487.8C447.5,487.8 447.8,487.7 448.0,487.6C448.2,487.5 448.4,487.4 448.6,487.3C448.8,487.2 449.0,487.1 449.2,487.0C449.5,487.0 449.7,486.9 449.9,486.9C450.2,486.9 450.4,486.9 450.6,486.9C450.9,486.9 451.1,487.0 451.3,487.0C451.5,487.0 451.8,487.0 452.0,487.0C452.2,487.0 452.5,487.0 452.7,487.0C452.9,487.0 453.1,487.0 453.4,487.0C453.6,487.0 453.8,487.1 454.0,487.1C454.3,487.1 454.5,487.1 454.7,487.1C455.0,487.1 455.2,487.1 455.5,487.1C455.7,487.1 455.9,487.1 456.2,487.1C456.4,487.1 456.7,487.2 456.9,487.2C457.2,487.2 457.4,487.2 457.7,487.2C458.0,487.2 458.2,487.2 458.5,487.2C458.8,487.3 459.0,487.3 459.3,487.3C459.6,487.3 459.9,487.4 460.2,487.4C460.5,487.4 460.8,487.4 461.1,487.5C461.4,487.5 461.7,487.5 462.1,487.6C462.4,487.6 462.8,487.6 463.1,487.6C463.5,487.7 463.9,487.7 464.3,487.7C464.6,487.8 465.1,487.8 465.5,487.9C465.9,487.9 466.2,488.0 466.6,488.2C467.0,488.3 467.3,488.5 467.6,488.6C468.0,488.8 468.4,489.0 468.7,489.1C469.1,489.3 469.5,489.5 469.9,489.7C470.3,489.8 470.7,490.0 471.2,490.2C471.6,490.4 472.1,490.6 472.6,490.8C473.0,491.1 473.6,491.3 474.0,491.5C474.5,491.8 474.7,492.2 475.1,492.5C475.5,492.8 475.8,493.2 476.2,493.5C476.6,493.9 477.0,494.2 477.4,494.6C477.8,495.0 478.3,495.4 478.7,495.8C479.1,496.2 479.4,496.6 479.6,497.1C479.9,497.6 479.9,498.0 480.0,498.5C480.1,499.0 480.3,499.5 480.4,500.0Z" fill="#08306b"/>
</g></svg><svg style="position:absolute;left:0;top:0;overflow:visible" width="939" height="671" viewBox="0 0 939 671">
<defs><filter id="sh" x="-50%" y="-50%" width="200%" height="200%"><feGaussianBlur in="SourceAlpha" stdDeviation="2.8"/><feOffset dx="-1" dy="4.5"/><feComponentTransfer><feFuncA type="linear" slope="0.5"/></feComponentTransfer><feMerge><feMergeNode/><feMergeNode in="SourceGraphic"/></feMerge></filter></defs>
<g filter="url(#sh)">
<path d="M123.5 386.3 C168 382.5 207.5 418 208 478 C208.3 512 199.5 546 190 576" stroke="#f00" stroke-width="4" fill="none" stroke-linecap="round"/>
<path d="M183 591 L181.9 569 L199.6 577 Z" fill="#f00"/>
</g></svg>
</body></html>
